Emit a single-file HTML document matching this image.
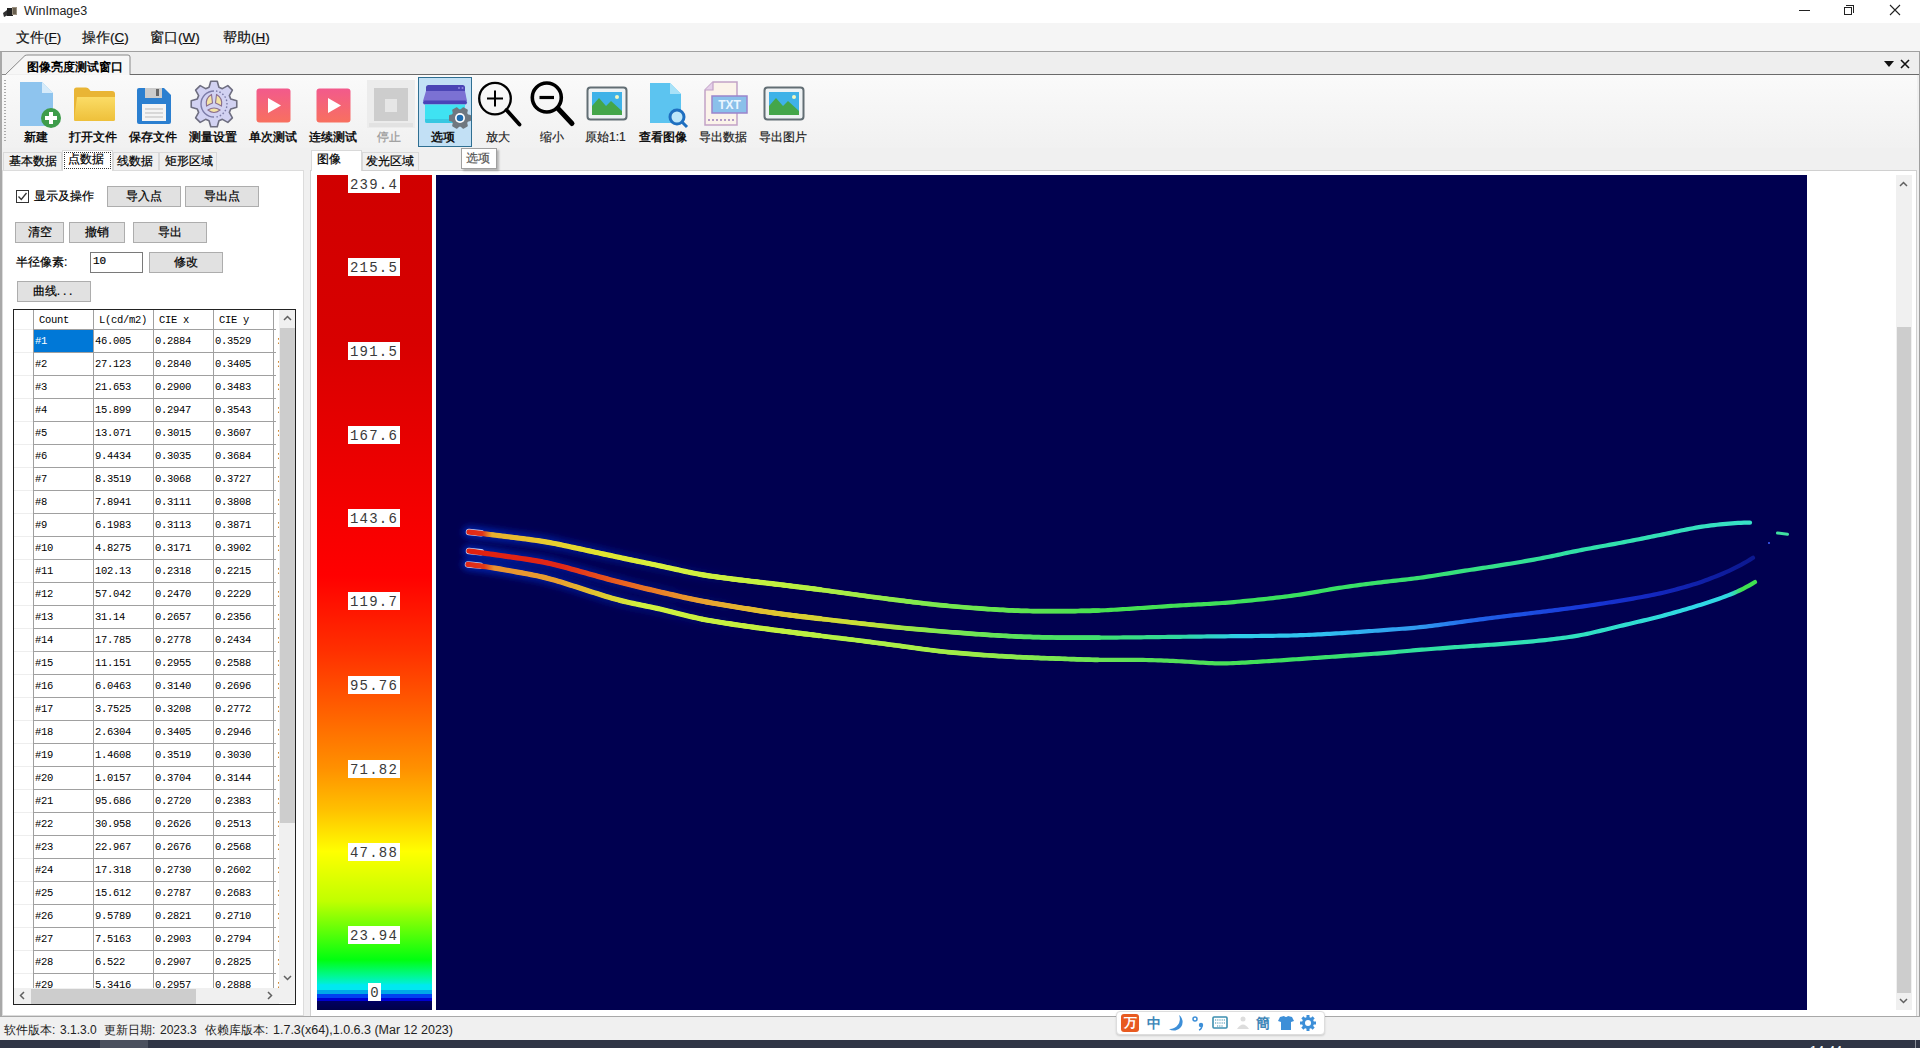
<!DOCTYPE html><html><head><meta charset="utf-8"><title>WinImage3</title><style>
*{margin:0;padding:0;box-sizing:border-box}
html,body{width:1920px;height:1048px;overflow:hidden}
body{position:relative;background:#f0f0f0;font-family:"Liberation Sans",sans-serif;color:#000;font-size:12px}
.t,.btn span{-webkit-text-stroke:0.2px currentColor}
.t[style*="bold"]{-webkit-text-stroke:0}
.a{position:absolute}
.t{position:absolute;white-space:nowrap;line-height:1}
.btn{position:absolute;background:#e1e1e1;border:1px solid #adadad}
.btn span{position:absolute;left:0;right:0;text-align:center;white-space:nowrap;line-height:1}
.mono{font-family:"Liberation Mono",monospace}
.cell{position:absolute;white-space:nowrap;line-height:1;font-family:"Liberation Mono",monospace;font-size:10.5px;letter-spacing:-0.3px}
.lbl{position:absolute;left:348px;width:52px;height:18px;background:#fff;font-family:"Liberation Mono",monospace;font-size:14px;letter-spacing:1.2px;color:#3a3a3a;line-height:21px;text-align:center;overflow:hidden}
</style></head><body>
<div class="a" style="left:0;top:0;width:1920px;height:23px;background:#fff"></div>
<svg class="a" style="left:2px;top:6px" width="16" height="12" viewBox="0 0 16 12"><path d="M1 7 L5 4 L6 9 L2 11Z" fill="#333"/><rect x="5" y="2" width="6" height="8" fill="#222"/><rect x="10" y="1" width="5" height="8" fill="#9a9080"/><rect x="11" y="2" width="3" height="6" fill="#6a6050"/></svg>
<div class="t" style="left:24px;top:5px;font-size:12.5px;color:#222;-webkit-text-stroke:0">WinImage3</div>
<div class="a" style="left:1799px;top:10px;width:11px;height:1px;background:#222"></div>
<div class="a" style="left:1844px;top:7px;width:8px;height:8px;border:1px solid #222;background:#fff"></div>
<div class="a" style="left:1846px;top:5px;width:8px;height:8px;border-top:1px solid #222;border-right:1px solid #222"></div>
<svg class="a" style="left:1889px;top:4px" width="12" height="12" viewBox="0 0 12 12"><path d="M1 1L11 11M11 1L1 11" stroke="#222" stroke-width="1.1"/></svg>
<div class="a" style="left:0;top:23px;width:1920px;height:28px;background:#f5f5f5"></div>
<div class="t" style="left:16px;top:31px;font-size:13.5px;color:#111">文件(<u>F</u>)</div>
<div class="t" style="left:82px;top:31px;font-size:13.5px;color:#111">操作(<u>C</u>)</div>
<div class="t" style="left:150px;top:31px;font-size:13.5px;color:#111">窗口(<u>W</u>)</div>
<div class="t" style="left:223px;top:31px;font-size:13.5px;color:#111">帮助(<u>H</u>)</div>
<div class="a" style="left:0;top:51px;width:1920px;height:1px;background:#a0a0a0"></div>
<div class="a" style="left:0;top:52px;width:1920px;height:23px;background:#eeeeee"></div>
<svg class="a" style="left:0;top:52px" width="140" height="24" viewBox="0 0 140 24"><path d="M6 22 L25 3.5 Q26 3 28 3 L128 3 Q130 3 130 5 L130 23 L140 23" fill="#f7f7f7" stroke="#888" stroke-width="1"/><path d="M0 22.5 L6 22.5" stroke="#888"/></svg>
<div class="t" style="left:27px;top:61px;font-size:12px;font-weight:bold">图像亮度测试窗口</div>
<div class="a" style="left:130px;top:74px;width:1790px;height:1px;background:#6a6a6a"></div>
<svg class="a" style="left:1884px;top:61px" width="10" height="6" viewBox="0 0 10 6"><path d="M0 0H10L5 6Z" fill="#111"/></svg>
<svg class="a" style="left:1900px;top:59px" width="10" height="10" viewBox="0 0 10 10"><path d="M1 1L9 9M9 1L1 9" stroke="#111" stroke-width="1.6"/></svg>
<div class="a" style="left:0;top:52px;width:2px;height:965px;background:#a8a8a8"></div>
<div class="a" style="left:2px;top:75px;width:1915px;height:73px;background:linear-gradient(#fafafa,#f1f1f1)"></div>
<div class="a" style="left:1919px;top:52px;width:1px;height:965px;background:#a0a0a0"></div>
<div class="a" style="left:4px;top:80px;width:2px;height:62px;background:repeating-linear-gradient(#aaa 0 1px,transparent 1px 3px)"></div>
<div class="a" style="left:418px;top:77px;width:54px;height:70px;background:#c2e0f5;border:1px solid #2f6f92"></div>
<svg class="a" style="left:18px;top:81px" width="46" height="50" viewBox="0 0 46 50"><path d="M2 1 H24 L35 12 V45 H2Z" fill="#8ec4ee"/><path d="M24 1 V12 H35Z" fill="#d6ebfa"/><circle cx="33" cy="37" r="10" fill="#3e9c4a"/><path d="M33 31V43M27 37H39" stroke="#fff" stroke-width="4"/></svg>
<svg class="a" style="left:73px;top:86px" width="44" height="38" viewBox="0 0 44 38"><defs><linearGradient id="fg" x1="0" y1="0" x2="0" y2="1"><stop offset="0" stop-color="#fbdc66"/><stop offset="1" stop-color="#eec03a"/></linearGradient></defs><path d="M1 4 Q1 1.5 3.5 1.5 H13 Q15 1.5 16 3 L17.5 5 H39 Q42 5 42 8 V33 Q42 35 40 35 H3 Q1 35 1 33Z" fill="#e9b535"/><path d="M4 11 H42 V33 Q42 35 40 35 H2 Q1 35 1.2 33 Z" fill="url(#fg)"/></svg>
<svg class="a" style="left:136px;top:87px" width="36" height="38" viewBox="0 0 36 38"><path d="M1 3 Q1 1 3 1 H28 L35 8 V35 Q35 37 33 37 H3 Q1 37 1 35Z" fill="#2b7fd0"/><rect x="9" y="1" width="17" height="10" fill="#ccc"/><rect x="20" y="2" width="3" height="7" fill="#666"/><rect x="6" y="17" width="24" height="17" fill="#f4f4f4"/><path d="M9 22H27M9 26H27M9 30H27" stroke="#bbb" stroke-width="1"/></svg>
<svg class="a" style="left:189px;top:79px" width="50" height="50" viewBox="0 0 50 50"><path d="M20.07 8.21 L21.76 2.23 L28.24 2.23 L29.93 8.21 L33.39 9.64 L38.81 6.61 L43.39 11.19 L40.36 16.61 L41.79 20.07 L47.77 21.76 L47.77 28.24 L41.79 29.93 L40.36 33.39 L43.39 38.81 L38.81 43.39 L33.39 40.36 L29.93 41.79 L28.24 47.77 L21.76 47.77 L20.07 41.79 L16.61 40.36 L11.19 43.39 L6.61 38.81 L9.64 33.39 L8.21 29.93 L2.23 28.24 L2.23 21.76 L8.21 20.07 L9.64 16.61 L6.61 11.19 L11.19 6.61 L16.61 9.64Z" fill="#d2d2f2" stroke="#6e6e80" stroke-width="1.6" stroke-linejoin="round"/><path d="M25 12 A13 13 0 1 0 25 38" fill="none" stroke="#7c7ca8" stroke-width="1.4"/><path d="M27 12 A13 13 0 0 1 38 25 A13 13 0 0 1 27 38" fill="none" stroke="#7c7ca8" stroke-width="1.4" stroke-dasharray="1.5 2"/><g fill="#f3e3a4" stroke="#8a6e8e" stroke-width="1.1"><path d="M22.5 15.5 Q16 19 17.5 27 Q21 25 23.5 24 Z"/><path d="M27.5 15.5 Q34 19 32.5 27 Q29 25 26.5 24 Z"/><path d="M19 31 Q25 27 31 31 Q25 36 19 31Z"/></g></svg>
<svg class="a" style="left:256px;top:88px" width="36" height="35" viewBox="0 0 36 35"><defs><linearGradient id="pg" x1="0" y1="0" x2="0" y2="1"><stop offset="0" stop-color="#f25a8c"/><stop offset="1" stop-color="#f8705f"/></linearGradient></defs><rect x="0.5" y="0.5" width="34" height="34" rx="3" fill="url(#pg)"/><path d="M12 10 L25 17.5 L12 25Z" fill="#fff"/></svg>
<svg class="a" style="left:316px;top:88px" width="36" height="35" viewBox="0 0 36 35"><rect x="0.5" y="0.5" width="34" height="34" rx="3" fill="url(#pg)"/><path d="M12 10 L25 17.5 L12 25Z" fill="#fff"/></svg>
<svg class="a" style="left:366px;top:79px" width="50" height="50" viewBox="0 0 50 50"><rect x="1" y="1" width="48" height="48" fill="#ececec"/><rect x="3" y="44" width="44" height="4" fill="#e2e2e2"/><rect x="8" y="9" width="34" height="33" fill="#cdcdcd"/><rect x="19" y="20" width="12" height="13" fill="#e6e6e6"/></svg>
<svg class="a" style="left:422px;top:83px" width="50" height="48" viewBox="0 0 50 48"><path d="M4 8 V4.5 Q4 2 6.5 2 H40.5 Q43 2 43 4.5 V8Z" fill="#4b45b5"/><path d="M4 8 H43 L45 18 H1Z" fill="#7b71d3"/><rect x="1" y="17.5" width="44" height="4" rx="2" fill="#4a42b8"/><circle cx="37" cy="5" r="1" fill="#8f88e0"/><circle cx="40.5" cy="5" r="1" fill="#8f88e0"/><path d="M3 21.5 H43 V38 Q43 40 41 40 H5 Q3 40 3 38Z" fill="#3fe2f2"/><path d="M3 36 H43 V38 Q43 40 41 40 H5 Q3 40 3 38Z" fill="#36c8e2"/><path d="M38.94 27.06 L41.20 25.00 L45.06 27.23 L44.41 30.22 L45.35 31.84 L48.26 32.77 L48.26 37.23 L45.35 38.16 L44.41 39.78 L45.06 42.77 L41.20 45.00 L38.94 42.94 L37.06 42.94 L34.80 45.00 L30.94 42.77 L31.59 39.78 L30.65 38.16 L27.74 37.23 L27.74 32.77 L30.65 31.84 L31.59 30.22 L30.94 27.23 L34.80 25.00 L37.06 27.06Z" fill="#6f7880" stroke="#6f7880" stroke-width="1.5" stroke-linejoin="round"/><circle cx="38" cy="35" r="5" fill="#ffffff"/><circle cx="38" cy="35" r="3.3" fill="#1f6db0"/></svg>
<svg class="a" style="left:476px;top:80px" width="48" height="48" viewBox="0 0 48 48"><circle cx="19" cy="18.6" r="15.8" fill="none" stroke="#000" stroke-width="2.3"/><path d="M19 10.5V26.5M11 18.6H27" stroke="#000" stroke-width="2"/><path d="M30.5 30 L43.5 44.5" stroke="#000" stroke-width="3.8" stroke-linecap="round"/></svg>
<svg class="a" style="left:529px;top:80px" width="48" height="48" viewBox="0 0 48 48"><circle cx="17.8" cy="17.5" r="14.5" fill="none" stroke="#000" stroke-width="3.6"/><path d="M10.5 17.5H25" stroke="#000" stroke-width="3.2"/><path d="M29 28.5 L43 43.5" stroke="#000" stroke-width="5" stroke-linecap="round"/></svg>
<svg class="a" style="left:586px;top:86px" width="42" height="36" viewBox="0 0 42 36"><rect x="1.5" y="1.5" width="39" height="32" rx="3" fill="#eef2f4" stroke="#626e74" stroke-width="2"/><rect x="6" y="6" width="30" height="23" fill="#3fb2e8"/><path d="M6 29 V20 L13 12 L20 20 L25 15 L36 25 V29Z" fill="#44a64a"/><circle cx="31" cy="11" r="2" fill="#f3f7c0"/></svg>
<svg class="a" style="left:648px;top:82px" width="42" height="48" viewBox="0 0 42 48"><path d="M2 1 H22 L33 12 V41 H2Z" fill="#5cc4f0"/><path d="M22 1V12H33Z" fill="#a8e2f8"/><circle cx="29" cy="35" r="7" fill="#bde6fa" stroke="#1f6fc0" stroke-width="3"/><path d="M34 40 L39 45" stroke="#1f6fc0" stroke-width="3"/></svg>
<svg class="a" style="left:702px;top:81px" width="48" height="46" viewBox="0 0 48 46"><path d="M3 9 L11 1 H35 V44 H3Z" fill="#fbf3ea" stroke="#c2a2c6" stroke-width="1.5"/><path d="M3 9 H11 V1" fill="#e5d0ea" stroke="#c2a2c6" stroke-width="1.2"/><rect x="10" y="15" width="35" height="17" fill="#8ac0ea" stroke="#9b85cc" stroke-width="1.5"/><text x="27.5" y="28" font-family="Liberation Sans" font-size="12" font-weight="bold" fill="#eaf6ff" text-anchor="middle">TXT</text><path d="M6 39 H33" stroke="#b49cc6" stroke-width="2" stroke-dasharray="2 2"/></svg>
<svg class="a" style="left:763px;top:86px" width="42" height="36" viewBox="0 0 42 36"><rect x="1.5" y="1.5" width="39" height="32" rx="3" fill="#eef2f4" stroke="#626e74" stroke-width="2"/><rect x="6" y="6" width="30" height="23" fill="#3fb2e8"/><path d="M6 29 V20 L13 12 L20 20 L25 15 L36 25 V29Z" fill="#44a64a"/><circle cx="31" cy="11" r="2" fill="#f3f7c0"/></svg>
<div class="t" style="left:24px;top:131px;font-size:12px;font-weight:bold;color:#111">新建</div>
<div class="t" style="left:69px;top:131px;font-size:12px;font-weight:bold;color:#111">打开文件</div>
<div class="t" style="left:129px;top:131px;font-size:12px;font-weight:bold;color:#111">保存文件</div>
<div class="t" style="left:189px;top:131px;font-size:12px;font-weight:bold;color:#111">测量设置</div>
<div class="t" style="left:249px;top:131px;font-size:12px;font-weight:bold;color:#111">单次测试</div>
<div class="t" style="left:309px;top:131px;font-size:12px;font-weight:bold;color:#111">连续测试</div>
<div class="t" style="left:377px;top:131px;font-size:12px;font-weight:normal;color:#999">停止</div>
<div class="t" style="left:431px;top:131px;font-size:12px;font-weight:bold;color:#111">选项</div>
<div class="t" style="left:486px;top:131px;font-size:12px;font-weight:normal;color:#222">放大</div>
<div class="t" style="left:540px;top:131px;font-size:12px;font-weight:normal;color:#222">缩小</div>
<div class="t" style="left:585px;top:131px;font-size:12px;font-weight:normal;color:#222">原始1:1</div>
<div class="t" style="left:639px;top:131px;font-size:12px;font-weight:bold;color:#111">查看图像</div>
<div class="t" style="left:699px;top:131px;font-size:12px;font-weight:normal;color:#222">导出数据</div>
<div class="t" style="left:759px;top:131px;font-size:12px;font-weight:normal;color:#222">导出图片</div>
<div class="a" style="left:2px;top:170px;width:302px;height:846px;background:#fff;border:1px solid #dcdcdc"></div>
<div class="a" style="left:3px;top:152px;width:59px;height:18px;background:#f0f0f0;border:1px solid #d9d9d9;border-bottom:none"></div>
<div class="a" style="left:62px;top:150px;width:51px;height:21px;background:#fff;border:1px solid #d9d9d9;border-bottom:none"></div>
<div class="a" style="left:113px;top:152px;width:46px;height:18px;background:#f0f0f0;border:1px solid #d9d9d9;border-bottom:none"></div>
<div class="a" style="left:159px;top:152px;width:58px;height:18px;background:#f0f0f0;border:1px solid #d9d9d9;border-bottom:none"></div>
<div class="a" style="left:64px;top:152px;width:47px;height:17px;border:1px dotted #333"></div>
<div class="t" style="left:9px;top:155px;font-size:12px">基本数据</div>
<div class="t" style="left:68px;top:153px;font-size:12px">点数据</div>
<div class="t" style="left:117px;top:155px;font-size:12px">线数据</div>
<div class="t" style="left:165px;top:155px;font-size:12px">矩形区域</div>
<div class="a" style="left:16px;top:190px;width:13px;height:13px;border:1px solid #333;background:#fff"></div>
<svg class="a" style="left:17px;top:191px" width="11" height="11" viewBox="0 0 11 11"><path d="M1.5 5.5 L4.3 8.5 L9.5 2" fill="none" stroke="#333" stroke-width="1.3"/></svg>
<div class="t" style="left:34px;top:190px;font-size:12px">显示及操作</div>
<div class="btn" style="left:107px;top:186px;width:74px;height:21px"><span style="top:3px;font-size:12px">导入点</span></div>
<div class="btn" style="left:185px;top:186px;width:74px;height:21px"><span style="top:3px;font-size:12px">导出点</span></div>
<div class="btn" style="left:15px;top:222px;width:49px;height:21px"><span style="top:3px;font-size:12px">清空</span></div>
<div class="btn" style="left:69px;top:222px;width:56px;height:21px"><span style="top:3px;font-size:12px">撤销</span></div>
<div class="btn" style="left:133px;top:222px;width:74px;height:21px"><span style="top:3px;font-size:12px">导出</span></div>
<div class="t" style="left:16px;top:256px;font-size:12px">半径像素:</div>
<div class="a" style="left:90px;top:252px;width:53px;height:21px;border:1px solid #7a7a7a;background:#fff"></div>
<div class="t mono" style="left:93px;top:256px;font-size:11px">10</div>
<div class="btn" style="left:149px;top:252px;width:74px;height:21px"><span style="top:3px;font-size:12px">修改</span></div>
<div class="btn" style="left:17px;top:281px;width:74px;height:21px"><span style="top:3px;font-size:12px"><span style="position:static;letter-spacing:0">曲线</span><span style="position:static;letter-spacing:2.8px">...</span></span></div>
<div class="a" style="left:13px;top:309px;width:283px;height:696px;border:1px solid #222;background:#fff;overflow:hidden">
<div class="a" style="left:0;top:0;width:265px;height:19px;background:#fff"></div>
<div class="cell" style="left:25px;top:5px">Count</div>
<div class="cell" style="left:85px;top:5px">L(cd/m2)</div>
<div class="cell" style="left:145px;top:5px">CIE x</div>
<div class="cell" style="left:205px;top:5px">CIE y</div>
<div class="a" style="left:19px;top:0;width:1px;height:678px;background:#a0a0a0"></div>
<div class="a" style="left:79px;top:0;width:1px;height:678px;background:#a0a0a0"></div>
<div class="a" style="left:139px;top:0;width:1px;height:678px;background:#a0a0a0"></div>
<div class="a" style="left:199px;top:0;width:1px;height:678px;background:#a0a0a0"></div>
<div class="a" style="left:259px;top:0;width:1px;height:678px;background:#a0a0a0"></div>
<div class="a" style="left:19px;top:19px;width:243px;height:1px;background:#a0a0a0"></div>
<div class="a" style="left:0;top:19px;width:19px;height:1px;background:#eee"></div>
<div class="a" style="left:19px;top:42px;width:243px;height:1px;background:#a0a0a0"></div>
<div class="a" style="left:0;top:42px;width:19px;height:1px;background:#eee"></div>
<div class="a" style="left:19px;top:65px;width:243px;height:1px;background:#a0a0a0"></div>
<div class="a" style="left:0;top:65px;width:19px;height:1px;background:#eee"></div>
<div class="a" style="left:19px;top:88px;width:243px;height:1px;background:#a0a0a0"></div>
<div class="a" style="left:0;top:88px;width:19px;height:1px;background:#eee"></div>
<div class="a" style="left:19px;top:111px;width:243px;height:1px;background:#a0a0a0"></div>
<div class="a" style="left:0;top:111px;width:19px;height:1px;background:#eee"></div>
<div class="a" style="left:19px;top:134px;width:243px;height:1px;background:#a0a0a0"></div>
<div class="a" style="left:0;top:134px;width:19px;height:1px;background:#eee"></div>
<div class="a" style="left:19px;top:157px;width:243px;height:1px;background:#a0a0a0"></div>
<div class="a" style="left:0;top:157px;width:19px;height:1px;background:#eee"></div>
<div class="a" style="left:19px;top:180px;width:243px;height:1px;background:#a0a0a0"></div>
<div class="a" style="left:0;top:180px;width:19px;height:1px;background:#eee"></div>
<div class="a" style="left:19px;top:203px;width:243px;height:1px;background:#a0a0a0"></div>
<div class="a" style="left:0;top:203px;width:19px;height:1px;background:#eee"></div>
<div class="a" style="left:19px;top:226px;width:243px;height:1px;background:#a0a0a0"></div>
<div class="a" style="left:0;top:226px;width:19px;height:1px;background:#eee"></div>
<div class="a" style="left:19px;top:249px;width:243px;height:1px;background:#a0a0a0"></div>
<div class="a" style="left:0;top:249px;width:19px;height:1px;background:#eee"></div>
<div class="a" style="left:19px;top:272px;width:243px;height:1px;background:#a0a0a0"></div>
<div class="a" style="left:0;top:272px;width:19px;height:1px;background:#eee"></div>
<div class="a" style="left:19px;top:295px;width:243px;height:1px;background:#a0a0a0"></div>
<div class="a" style="left:0;top:295px;width:19px;height:1px;background:#eee"></div>
<div class="a" style="left:19px;top:318px;width:243px;height:1px;background:#a0a0a0"></div>
<div class="a" style="left:0;top:318px;width:19px;height:1px;background:#eee"></div>
<div class="a" style="left:19px;top:341px;width:243px;height:1px;background:#a0a0a0"></div>
<div class="a" style="left:0;top:341px;width:19px;height:1px;background:#eee"></div>
<div class="a" style="left:19px;top:364px;width:243px;height:1px;background:#a0a0a0"></div>
<div class="a" style="left:0;top:364px;width:19px;height:1px;background:#eee"></div>
<div class="a" style="left:19px;top:387px;width:243px;height:1px;background:#a0a0a0"></div>
<div class="a" style="left:0;top:387px;width:19px;height:1px;background:#eee"></div>
<div class="a" style="left:19px;top:410px;width:243px;height:1px;background:#a0a0a0"></div>
<div class="a" style="left:0;top:410px;width:19px;height:1px;background:#eee"></div>
<div class="a" style="left:19px;top:433px;width:243px;height:1px;background:#a0a0a0"></div>
<div class="a" style="left:0;top:433px;width:19px;height:1px;background:#eee"></div>
<div class="a" style="left:19px;top:456px;width:243px;height:1px;background:#a0a0a0"></div>
<div class="a" style="left:0;top:456px;width:19px;height:1px;background:#eee"></div>
<div class="a" style="left:19px;top:479px;width:243px;height:1px;background:#a0a0a0"></div>
<div class="a" style="left:0;top:479px;width:19px;height:1px;background:#eee"></div>
<div class="a" style="left:19px;top:502px;width:243px;height:1px;background:#a0a0a0"></div>
<div class="a" style="left:0;top:502px;width:19px;height:1px;background:#eee"></div>
<div class="a" style="left:19px;top:525px;width:243px;height:1px;background:#a0a0a0"></div>
<div class="a" style="left:0;top:525px;width:19px;height:1px;background:#eee"></div>
<div class="a" style="left:19px;top:548px;width:243px;height:1px;background:#a0a0a0"></div>
<div class="a" style="left:0;top:548px;width:19px;height:1px;background:#eee"></div>
<div class="a" style="left:19px;top:571px;width:243px;height:1px;background:#a0a0a0"></div>
<div class="a" style="left:0;top:571px;width:19px;height:1px;background:#eee"></div>
<div class="a" style="left:19px;top:594px;width:243px;height:1px;background:#a0a0a0"></div>
<div class="a" style="left:0;top:594px;width:19px;height:1px;background:#eee"></div>
<div class="a" style="left:19px;top:617px;width:243px;height:1px;background:#a0a0a0"></div>
<div class="a" style="left:0;top:617px;width:19px;height:1px;background:#eee"></div>
<div class="a" style="left:19px;top:640px;width:243px;height:1px;background:#a0a0a0"></div>
<div class="a" style="left:0;top:640px;width:19px;height:1px;background:#eee"></div>
<div class="a" style="left:19px;top:663px;width:243px;height:1px;background:#a0a0a0"></div>
<div class="a" style="left:0;top:663px;width:19px;height:1px;background:#eee"></div>
<div class="a" style="left:19px;top:686px;width:243px;height:1px;background:#a0a0a0"></div>
<div class="a" style="left:0;top:686px;width:19px;height:1px;background:#eee"></div>
<div class="a" style="left:20px;top:20px;width:59px;height:22px;background:#0078d7"></div>
<div class="cell" style="left:21px;top:26px;color:#fff">#1</div>
<div class="cell" style="left:81px;top:26px">46.005</div>
<div class="cell" style="left:141px;top:26px">0.2884</div>
<div class="cell" style="left:201px;top:26px">0.3529</div>
<div class="cell" style="left:262px;top:26px">:</div>
<div class="cell" style="left:21px;top:49px;color:#000">#2</div>
<div class="cell" style="left:81px;top:49px">27.123</div>
<div class="cell" style="left:141px;top:49px">0.2840</div>
<div class="cell" style="left:201px;top:49px">0.3405</div>
<div class="cell" style="left:262px;top:49px">:</div>
<div class="cell" style="left:21px;top:72px;color:#000">#3</div>
<div class="cell" style="left:81px;top:72px">21.653</div>
<div class="cell" style="left:141px;top:72px">0.2900</div>
<div class="cell" style="left:201px;top:72px">0.3483</div>
<div class="cell" style="left:262px;top:72px">:</div>
<div class="cell" style="left:21px;top:95px;color:#000">#4</div>
<div class="cell" style="left:81px;top:95px">15.899</div>
<div class="cell" style="left:141px;top:95px">0.2947</div>
<div class="cell" style="left:201px;top:95px">0.3543</div>
<div class="cell" style="left:262px;top:95px">:</div>
<div class="cell" style="left:21px;top:118px;color:#000">#5</div>
<div class="cell" style="left:81px;top:118px">13.071</div>
<div class="cell" style="left:141px;top:118px">0.3015</div>
<div class="cell" style="left:201px;top:118px">0.3607</div>
<div class="cell" style="left:262px;top:118px">:</div>
<div class="cell" style="left:21px;top:141px;color:#000">#6</div>
<div class="cell" style="left:81px;top:141px">9.4434</div>
<div class="cell" style="left:141px;top:141px">0.3035</div>
<div class="cell" style="left:201px;top:141px">0.3684</div>
<div class="cell" style="left:262px;top:141px">:</div>
<div class="cell" style="left:21px;top:164px;color:#000">#7</div>
<div class="cell" style="left:81px;top:164px">8.3519</div>
<div class="cell" style="left:141px;top:164px">0.3068</div>
<div class="cell" style="left:201px;top:164px">0.3727</div>
<div class="cell" style="left:262px;top:164px">:</div>
<div class="cell" style="left:21px;top:187px;color:#000">#8</div>
<div class="cell" style="left:81px;top:187px">7.8941</div>
<div class="cell" style="left:141px;top:187px">0.3111</div>
<div class="cell" style="left:201px;top:187px">0.3808</div>
<div class="cell" style="left:262px;top:187px">:</div>
<div class="cell" style="left:21px;top:210px;color:#000">#9</div>
<div class="cell" style="left:81px;top:210px">6.1983</div>
<div class="cell" style="left:141px;top:210px">0.3113</div>
<div class="cell" style="left:201px;top:210px">0.3871</div>
<div class="cell" style="left:262px;top:210px">:</div>
<div class="cell" style="left:21px;top:233px;color:#000">#10</div>
<div class="cell" style="left:81px;top:233px">4.8275</div>
<div class="cell" style="left:141px;top:233px">0.3171</div>
<div class="cell" style="left:201px;top:233px">0.3902</div>
<div class="cell" style="left:262px;top:233px">:</div>
<div class="cell" style="left:21px;top:256px;color:#000">#11</div>
<div class="cell" style="left:81px;top:256px">102.13</div>
<div class="cell" style="left:141px;top:256px">0.2318</div>
<div class="cell" style="left:201px;top:256px">0.2215</div>
<div class="cell" style="left:262px;top:256px">:</div>
<div class="cell" style="left:21px;top:279px;color:#000">#12</div>
<div class="cell" style="left:81px;top:279px">57.042</div>
<div class="cell" style="left:141px;top:279px">0.2470</div>
<div class="cell" style="left:201px;top:279px">0.2229</div>
<div class="cell" style="left:262px;top:279px">:</div>
<div class="cell" style="left:21px;top:302px;color:#000">#13</div>
<div class="cell" style="left:81px;top:302px">31.14</div>
<div class="cell" style="left:141px;top:302px">0.2657</div>
<div class="cell" style="left:201px;top:302px">0.2356</div>
<div class="cell" style="left:262px;top:302px">:</div>
<div class="cell" style="left:21px;top:325px;color:#000">#14</div>
<div class="cell" style="left:81px;top:325px">17.785</div>
<div class="cell" style="left:141px;top:325px">0.2778</div>
<div class="cell" style="left:201px;top:325px">0.2434</div>
<div class="cell" style="left:262px;top:325px">:</div>
<div class="cell" style="left:21px;top:348px;color:#000">#15</div>
<div class="cell" style="left:81px;top:348px">11.151</div>
<div class="cell" style="left:141px;top:348px">0.2955</div>
<div class="cell" style="left:201px;top:348px">0.2588</div>
<div class="cell" style="left:262px;top:348px">:</div>
<div class="cell" style="left:21px;top:371px;color:#000">#16</div>
<div class="cell" style="left:81px;top:371px">6.0463</div>
<div class="cell" style="left:141px;top:371px">0.3140</div>
<div class="cell" style="left:201px;top:371px">0.2696</div>
<div class="cell" style="left:262px;top:371px">:</div>
<div class="cell" style="left:21px;top:394px;color:#000">#17</div>
<div class="cell" style="left:81px;top:394px">3.7525</div>
<div class="cell" style="left:141px;top:394px">0.3208</div>
<div class="cell" style="left:201px;top:394px">0.2772</div>
<div class="cell" style="left:262px;top:394px">:</div>
<div class="cell" style="left:21px;top:417px;color:#000">#18</div>
<div class="cell" style="left:81px;top:417px">2.6304</div>
<div class="cell" style="left:141px;top:417px">0.3405</div>
<div class="cell" style="left:201px;top:417px">0.2946</div>
<div class="cell" style="left:262px;top:417px">:</div>
<div class="cell" style="left:21px;top:440px;color:#000">#19</div>
<div class="cell" style="left:81px;top:440px">1.4608</div>
<div class="cell" style="left:141px;top:440px">0.3519</div>
<div class="cell" style="left:201px;top:440px">0.3030</div>
<div class="cell" style="left:262px;top:440px">:</div>
<div class="cell" style="left:21px;top:463px;color:#000">#20</div>
<div class="cell" style="left:81px;top:463px">1.0157</div>
<div class="cell" style="left:141px;top:463px">0.3704</div>
<div class="cell" style="left:201px;top:463px">0.3144</div>
<div class="cell" style="left:262px;top:463px">:</div>
<div class="cell" style="left:21px;top:486px;color:#000">#21</div>
<div class="cell" style="left:81px;top:486px">95.686</div>
<div class="cell" style="left:141px;top:486px">0.2720</div>
<div class="cell" style="left:201px;top:486px">0.2383</div>
<div class="cell" style="left:262px;top:486px">:</div>
<div class="cell" style="left:21px;top:509px;color:#000">#22</div>
<div class="cell" style="left:81px;top:509px">30.958</div>
<div class="cell" style="left:141px;top:509px">0.2626</div>
<div class="cell" style="left:201px;top:509px">0.2513</div>
<div class="cell" style="left:262px;top:509px">:</div>
<div class="cell" style="left:21px;top:532px;color:#000">#23</div>
<div class="cell" style="left:81px;top:532px">22.967</div>
<div class="cell" style="left:141px;top:532px">0.2676</div>
<div class="cell" style="left:201px;top:532px">0.2568</div>
<div class="cell" style="left:262px;top:532px">:</div>
<div class="cell" style="left:21px;top:555px;color:#000">#24</div>
<div class="cell" style="left:81px;top:555px">17.318</div>
<div class="cell" style="left:141px;top:555px">0.2730</div>
<div class="cell" style="left:201px;top:555px">0.2602</div>
<div class="cell" style="left:262px;top:555px">:</div>
<div class="cell" style="left:21px;top:578px;color:#000">#25</div>
<div class="cell" style="left:81px;top:578px">15.612</div>
<div class="cell" style="left:141px;top:578px">0.2787</div>
<div class="cell" style="left:201px;top:578px">0.2683</div>
<div class="cell" style="left:262px;top:578px">:</div>
<div class="cell" style="left:21px;top:601px;color:#000">#26</div>
<div class="cell" style="left:81px;top:601px">9.5789</div>
<div class="cell" style="left:141px;top:601px">0.2821</div>
<div class="cell" style="left:201px;top:601px">0.2710</div>
<div class="cell" style="left:262px;top:601px">:</div>
<div class="cell" style="left:21px;top:624px;color:#000">#27</div>
<div class="cell" style="left:81px;top:624px">7.5163</div>
<div class="cell" style="left:141px;top:624px">0.2903</div>
<div class="cell" style="left:201px;top:624px">0.2794</div>
<div class="cell" style="left:262px;top:624px">:</div>
<div class="cell" style="left:21px;top:647px;color:#000">#28</div>
<div class="cell" style="left:81px;top:647px">6.522</div>
<div class="cell" style="left:141px;top:647px">0.2907</div>
<div class="cell" style="left:201px;top:647px">0.2825</div>
<div class="cell" style="left:262px;top:647px">:</div>
<div class="cell" style="left:21px;top:670px;color:#000">#29</div>
<div class="cell" style="left:81px;top:670px">5.3416</div>
<div class="cell" style="left:141px;top:670px">0.2957</div>
<div class="cell" style="left:201px;top:670px">0.2888</div>
<div class="cell" style="left:262px;top:670px">:</div>
<div class="a" style="left:265px;top:0;width:17px;height:678px;background:#f0f0f0"></div>
<div class="a" style="left:266px;top:18px;width:15px;height:495px;background:#cdcdcd"></div>
<svg class="a" style="left:269px;top:5px" width="9" height="6" viewBox="0 0 9 6"><path d="M1 5L4.5 1.5L8 5" fill="none" stroke="#606060" stroke-width="1.5"/></svg>
<svg class="a" style="left:269px;top:665px" width="9" height="6" viewBox="0 0 9 6"><path d="M1 1L4.5 4.5L8 1" fill="none" stroke="#606060" stroke-width="1.5"/></svg>
<div class="a" style="left:0;top:678px;width:265px;height:16px;background:#f0f0f0"></div>
<div class="a" style="left:17px;top:679px;width:165px;height:15px;background:#cdcdcd"></div>
<svg class="a" style="left:5px;top:681px" width="6" height="9" viewBox="0 0 6 9"><path d="M5 1L1.5 4.5L5 8" fill="none" stroke="#606060" stroke-width="1.5"/></svg>
<svg class="a" style="left:253px;top:681px" width="6" height="9" viewBox="0 0 6 9"><path d="M1 1L4.5 4.5L1 8" fill="none" stroke="#606060" stroke-width="1.5"/></svg>
<div class="a" style="left:265px;top:678px;width:17px;height:15px;background:#f0f0f0"></div>
</div>
<div class="a" style="left:310px;top:170px;width:1607px;height:847px;background:#fff;border:1px solid #d0d0d0"></div>
<div class="a" style="left:311px;top:150px;width:51px;height:21px;background:#fff;border:1px solid #d9d9d9;border-bottom:none"></div>
<div class="a" style="left:362px;top:152px;width:57px;height:18px;background:#f0f0f0;border:1px solid #d9d9d9;border-bottom:none"></div>
<div class="t" style="left:317px;top:153px;font-size:12px">图像</div>
<div class="t" style="left:366px;top:155px;font-size:12px">发光区域</div>
<div class="a" style="left:317px;top:175px;width:115px;height:835px;background:linear-gradient(#d00000 0.00%,#d80000 20.00%,#e60000 30.50%,#f40000 40.00%,#ff0000 48.00%,#ff3000 57.00%,#ff5800 63.00%,#ff9000 71.00%,#ffc000 76.00%,#ffff00 81.00%,#c0ff00 87.00%,#00ff10 94.00%,#00f890 95.89%,#00f0d0 96.77%,#00e8f0 97.00%,#00e8f0 97.59%,#00a8e8 97.59%,#00a8e8 98.03%,#0040f0 98.03%,#0040f0 98.53%,#0000d0 98.53%,#0000d0 98.98%,#000060 98.98%,#000048 100.00%)"></div>
<div class="lbl" style="top:175px">239.4</div>
<div class="lbl" style="top:258px">215.5</div>
<div class="lbl" style="top:342px">191.5</div>
<div class="lbl" style="top:426px">167.6</div>
<div class="lbl" style="top:509px">143.6</div>
<div class="lbl" style="top:592px">119.7</div>
<div class="lbl" style="top:676px">95.76</div>
<div class="lbl" style="top:760px">71.82</div>
<div class="lbl" style="top:843px">47.88</div>
<div class="lbl" style="top:926px">23.94</div>
<div class="lbl" style="top:983px;left:368px;width:13px;height:18px;letter-spacing:0">0</div>
<div class="a" style="left:436px;top:175px;width:1371px;height:835px;background:#000050"></div>
<svg class="a" style="left:436px;top:175px" width="1371" height="835" viewBox="436 175 1371 835"><defs><linearGradient id="gA" gradientUnits="userSpaceOnUse" x1="436" y1="0" x2="1807" y2="0"><stop offset="0.0241" stop-color="#e02818"/><stop offset="0.0336" stop-color="#e03018"/><stop offset="0.0408" stop-color="#e8b030"/><stop offset="0.0759" stop-color="#e8c830"/><stop offset="0.1196" stop-color="#e0e430"/><stop offset="0.1634" stop-color="#d8f040"/><stop offset="0.2509" stop-color="#c0f040"/><stop offset="0.3093" stop-color="#a0ec48"/><stop offset="0.3676" stop-color="#78e850"/><stop offset="0.4843" stop-color="#48e050"/><stop offset="0.6302" stop-color="#38e060"/><stop offset="0.7177" stop-color="#38e070"/><stop offset="0.8344" stop-color="#30e0a8"/><stop offset="0.9599" stop-color="#38e0c8"/></linearGradient><linearGradient id="gB" gradientUnits="userSpaceOnUse" x1="436" y1="0" x2="1807" y2="0"><stop offset="0.0241" stop-color="#e02010"/><stop offset="0.0904" stop-color="#e02818"/><stop offset="0.1342" stop-color="#e86020"/><stop offset="0.1926" stop-color="#e8a030"/><stop offset="0.2509" stop-color="#e0c830"/><stop offset="0.3093" stop-color="#c8e038"/><stop offset="0.3676" stop-color="#80e850"/><stop offset="0.4406" stop-color="#50e060"/><stop offset="0.4843" stop-color="#40e070"/><stop offset="0.5427" stop-color="#30d8a0"/><stop offset="0.5864" stop-color="#30d0e8"/><stop offset="0.6448" stop-color="#30c0f0"/><stop offset="0.7177" stop-color="#3098f0"/><stop offset="0.7615" stop-color="#2060e8"/><stop offset="0.8344" stop-color="#1838d8"/><stop offset="0.8855" stop-color="#1428c0"/><stop offset="0.9220" stop-color="#1020a8"/><stop offset="0.9606" stop-color="#0c1890"/></linearGradient><linearGradient id="gC" gradientUnits="userSpaceOnUse" x1="436" y1="0" x2="1807" y2="0"><stop offset="0.0233" stop-color="#e02818"/><stop offset="0.0350" stop-color="#e03818"/><stop offset="0.0423" stop-color="#e89030"/><stop offset="0.0904" stop-color="#e8a030"/><stop offset="0.1196" stop-color="#e0c830"/><stop offset="0.1488" stop-color="#d0f040"/><stop offset="0.2509" stop-color="#c0f040"/><stop offset="0.3093" stop-color="#b0f048"/><stop offset="0.3822" stop-color="#a0ec48"/><stop offset="0.4406" stop-color="#80e850"/><stop offset="0.5208" stop-color="#58e058"/><stop offset="0.6010" stop-color="#40e058"/><stop offset="0.6594" stop-color="#38e070"/><stop offset="0.7177" stop-color="#30e0a0"/><stop offset="0.8344" stop-color="#30e0c0"/><stop offset="0.9220" stop-color="#30d8e8"/><stop offset="0.9438" stop-color="#30d8e0"/><stop offset="0.9526" stop-color="#40e050"/><stop offset="0.9628" stop-color="#40e050"/></linearGradient><linearGradient id="halo" gradientUnits="userSpaceOnUse" x1="460" y1="0" x2="760" y2="0"><stop offset="0" stop-color="#0030d0" stop-opacity="0.7"/><stop offset="1" stop-color="#0030d0" stop-opacity="0"/></linearGradient><filter id="blur" x="-10%" y="-50%" width="120%" height="200%"><feGaussianBlur stdDeviation="3"/></filter></defs><path d="M469.0 532.00 L472.0 532.36 L475.0 532.71 L478.0 533.07 L481.0 533.42 L484.0 533.78 L487.0 534.15 L490.0 534.51 L493.0 534.88 L496.0 535.25 L499.0 535.62 L502.0 535.99 L505.0 536.36 L508.0 536.74 L511.0 537.12 L514.0 537.49 L517.0 537.87 L520.0 538.25 L523.0 538.63 L526.0 539.02 L529.0 539.41 L532.0 539.82 L535.0 540.24 L538.0 540.67 L541.0 541.13 L544.0 541.62 L547.0 542.13 L550.0 542.67 L553.0 543.23 L556.0 543.82 L559.0 544.42 L562.0 545.04 L565.0 545.67 L568.0 546.31 L571.0 546.96 L574.0 547.61 L577.0 548.26 L580.0 548.91 L583.0 549.56 L586.0 550.21 L589.0 550.86 L592.0 551.52 L595.0 552.17 L598.0 552.82 L601.0 553.47 L604.0 554.12 L607.0 554.77 L610.0 555.41 L613.0 556.05 L616.0 556.69 L619.0 557.33 L622.0 557.96 L625.0 558.59 L628.0 559.22 L631.0 559.84 L634.0 560.46 L637.0 561.08 L640.0 561.70 L643.0 562.32 L646.0 562.94 L649.0 563.57 L652.0 564.20 L655.0 564.83 L658.0 565.47 L661.0 566.11 L664.0 566.76 L667.0 567.42 L670.0 568.08 L673.0 568.74 L676.0 569.40 L679.0 570.06 L682.0 570.72 L685.0 571.37 L688.0 572.01 L691.0 572.63 L694.0 573.23 L697.0 573.80 L700.0 574.35 L703.0 574.87 L706.0 575.36 L709.0 575.82 L712.0 576.27 L715.0 576.69 L718.0 577.11 L721.0 577.51 L724.0 577.90 L727.0 578.29 L730.0 578.68 L733.0 579.06 L736.0 579.43 L739.0 579.81 L742.0 580.17 L745.0 580.53 L748.0 580.89 L751.0 581.25 L754.0 581.60 L757.0 581.95 L760.0 582.30 L763.0 582.65 L766.0 583.00 L769.0 583.35 L772.0 583.70 L775.0 584.05 L778.0 584.41 L781.0 584.77 L784.0 585.13 L787.0 585.50 L790.0 585.86 L793.0 586.23 L796.0 586.61 L799.0 586.98 L802.0 587.36 L805.0 587.74 L808.0 588.12 L811.0 588.50 L814.0 588.89 L817.0 589.28 L820.0 589.68 L823.0 590.09 L826.0 590.50 L829.0 590.91 L832.0 591.33 L835.0 591.75 L838.0 592.17 L841.0 592.59 L844.0 593.02 L847.0 593.44 L850.0 593.86 L853.0 594.28 L856.0 594.69 L859.0 595.10 L862.0 595.51 L865.0 595.92 L868.0 596.32 L871.0 596.72 L874.0 597.11 L877.0 597.50 L880.0 597.89 L883.0 598.28 L886.0 598.67 L889.0 599.06 L892.0 599.44 L895.0 599.82 L898.0 600.20 L901.0 600.58 L904.0 600.95 L907.0 601.32 L910.0 601.69 L913.0 602.05 L916.0 602.41 L919.0 602.77 L922.0 603.13 L925.0 603.48 L928.0 603.82 L931.0 604.16 L934.0 604.49 L937.0 604.81 L940.0 605.12 L943.0 605.42 L946.0 605.71 L949.0 605.98 L952.0 606.25 L955.0 606.51 L958.0 606.77 L961.0 607.02 L964.0 607.27 L967.0 607.51 L970.0 607.74 L973.0 607.98 L976.0 608.20 L979.0 608.42 L982.0 608.63 L985.0 608.84 L988.0 609.04 L991.0 609.23 L994.0 609.42 L997.0 609.60 L1000.0 609.78 L1003.0 609.96 L1006.0 610.12 L1009.0 610.28 L1012.0 610.43 L1015.0 610.56 L1018.0 610.68 L1021.0 610.78 L1024.0 610.87 L1027.0 610.94 L1030.0 611.00 L1033.0 611.05 L1036.0 611.09 L1039.0 611.12 L1042.0 611.15 L1045.0 611.17 L1048.0 611.19 L1051.0 611.20 L1054.0 611.20 L1057.0 611.20 L1060.0 611.19 L1063.0 611.18 L1066.0 611.16 L1069.0 611.13 L1072.0 611.10 L1075.0 611.06 L1078.0 611.02 L1081.0 610.97 L1084.0 610.91 L1087.0 610.85 L1090.0 610.78 L1093.0 610.70 L1096.0 610.61 L1099.0 610.50 L1102.0 610.38 L1105.0 610.24 L1108.0 610.09 L1111.0 609.93 L1114.0 609.75 L1117.0 609.57 L1120.0 609.39 L1123.0 609.20 L1126.0 609.00 L1129.0 608.81 L1132.0 608.61 L1135.0 608.41 L1138.0 608.21 L1141.0 608.01 L1144.0 607.80 L1147.0 607.60 L1150.0 607.39 L1153.0 607.19 L1156.0 606.98 L1159.0 606.77 L1162.0 606.57 L1165.0 606.36 L1168.0 606.16 L1171.0 605.96 L1174.0 605.77 L1177.0 605.59 L1180.0 605.41 L1183.0 605.23 L1186.0 605.07 L1189.0 604.91 L1192.0 604.75 L1195.0 604.60 L1198.0 604.45 L1201.0 604.29 L1204.0 604.14 L1207.0 603.98 L1210.0 603.81 L1213.0 603.63 L1216.0 603.45 L1219.0 603.24 L1222.0 603.03 L1225.0 602.80 L1228.0 602.55 L1231.0 602.30 L1234.0 602.04 L1237.0 601.76 L1240.0 601.48 L1243.0 601.20 L1246.0 600.91 L1249.0 600.62 L1252.0 600.32 L1255.0 600.01 L1258.0 599.70 L1261.0 599.39 L1264.0 599.06 L1267.0 598.73 L1270.0 598.39 L1273.0 598.05 L1276.0 597.70 L1279.0 597.35 L1282.0 596.99 L1285.0 596.62 L1288.0 596.24 L1291.0 595.85 L1294.0 595.45 L1297.0 595.02 L1300.0 594.58 L1303.0 594.12 L1306.0 593.63 L1309.0 593.13 L1312.0 592.62 L1315.0 592.09 L1318.0 591.56 L1321.0 591.02 L1324.0 590.48 L1327.0 589.95 L1330.0 589.42 L1333.0 588.91 L1336.0 588.41 L1339.0 587.92 L1342.0 587.45 L1345.0 587.00 L1348.0 586.56 L1351.0 586.13 L1354.0 585.72 L1357.0 585.31 L1360.0 584.92 L1363.0 584.53 L1366.0 584.14 L1369.0 583.76 L1372.0 583.38 L1375.0 583.01 L1378.0 582.65 L1381.0 582.29 L1384.0 581.94 L1387.0 581.59 L1390.0 581.25 L1393.0 580.92 L1396.0 580.59 L1399.0 580.25 L1402.0 579.92 L1405.0 579.58 L1408.0 579.24 L1411.0 578.88 L1414.0 578.51 L1417.0 578.13 L1420.0 577.73 L1423.0 577.31 L1426.0 576.88 L1429.0 576.43 L1432.0 575.97 L1435.0 575.49 L1438.0 575.01 L1441.0 574.53 L1444.0 574.04 L1447.0 573.56 L1450.0 573.07 L1453.0 572.59 L1456.0 572.11 L1459.0 571.63 L1462.0 571.16 L1465.0 570.69 L1468.0 570.23 L1471.0 569.77 L1474.0 569.31 L1477.0 568.85 L1480.0 568.40 L1483.0 567.94 L1486.0 567.49 L1489.0 567.03 L1492.0 566.57 L1495.0 566.10 L1498.0 565.63 L1501.0 565.16 L1504.0 564.68 L1507.0 564.19 L1510.0 563.70 L1513.0 563.21 L1516.0 562.71 L1519.0 562.20 L1522.0 561.70 L1525.0 561.18 L1528.0 560.66 L1531.0 560.13 L1534.0 559.59 L1537.0 559.04 L1540.0 558.48 L1543.0 557.89 L1546.0 557.30 L1549.0 556.69 L1552.0 556.08 L1555.0 555.45 L1558.0 554.82 L1561.0 554.19 L1564.0 553.55 L1567.0 552.92 L1570.0 552.30 L1573.0 551.68 L1576.0 551.07 L1579.0 550.48 L1582.0 549.89 L1585.0 549.31 L1588.0 548.75 L1591.0 548.19 L1594.0 547.64 L1597.0 547.10 L1600.0 546.55 L1603.0 546.01 L1606.0 545.47 L1609.0 544.93 L1612.0 544.38 L1615.0 543.83 L1618.0 543.27 L1621.0 542.70 L1624.0 542.13 L1627.0 541.55 L1630.0 540.97 L1633.0 540.38 L1636.0 539.79 L1639.0 539.19 L1642.0 538.59 L1645.0 537.99 L1648.0 537.39 L1651.0 536.78 L1654.0 536.17 L1657.0 535.56 L1660.0 534.94 L1663.0 534.32 L1666.0 533.70 L1669.0 533.07 L1672.0 532.44 L1675.0 531.81 L1678.0 531.19 L1681.0 530.56 L1684.0 529.95 L1687.0 529.35 L1690.0 528.77 L1693.0 528.20 L1696.0 527.67 L1699.0 527.16 L1702.0 526.69 L1705.0 526.24 L1708.0 525.83 L1711.0 525.44 L1714.0 525.08 L1717.0 524.73 L1720.0 524.40 L1723.0 524.09 L1726.0 523.80 L1729.0 523.54 L1732.0 523.30 L1735.0 523.09 L1738.0 522.92 L1741.0 522.79 L1744.0 522.70 L1747.0 522.65 L1750.0 522.63" fill="none" stroke="url(#halo)" stroke-width="12" stroke-linecap="round" filter="url(#blur)"/><path d="M469.0 551.00 L472.0 551.43 L475.0 551.86 L478.0 552.29 L481.0 552.71 L484.0 553.14 L487.0 553.57 L490.0 554.00 L493.0 554.43 L496.0 554.86 L499.0 555.29 L502.0 555.71 L505.0 556.14 L508.0 556.57 L511.0 557.00 L514.0 557.43 L517.0 557.86 L520.0 558.29 L523.0 558.73 L526.0 559.17 L529.0 559.63 L532.0 560.09 L535.0 560.58 L538.0 561.10 L541.0 561.65 L544.0 562.23 L547.0 562.85 L550.0 563.51 L553.0 564.22 L556.0 564.95 L559.0 565.71 L562.0 566.50 L565.0 567.30 L568.0 568.11 L571.0 568.93 L574.0 569.76 L577.0 570.59 L580.0 571.42 L583.0 572.25 L586.0 573.08 L589.0 573.91 L592.0 574.74 L595.0 575.57 L598.0 576.40 L601.0 577.23 L604.0 578.05 L607.0 578.87 L610.0 579.68 L613.0 580.48 L616.0 581.27 L619.0 582.05 L622.0 582.82 L625.0 583.58 L628.0 584.33 L631.0 585.07 L634.0 585.80 L637.0 586.52 L640.0 587.24 L643.0 587.95 L646.0 588.66 L649.0 589.37 L652.0 590.08 L655.0 590.78 L658.0 591.48 L661.0 592.17 L664.0 592.86 L667.0 593.55 L670.0 594.23 L673.0 594.91 L676.0 595.59 L679.0 596.26 L682.0 596.93 L685.0 597.59 L688.0 598.24 L691.0 598.89 L694.0 599.52 L697.0 600.13 L700.0 600.73 L703.0 601.31 L706.0 601.87 L709.0 602.42 L712.0 602.95 L715.0 603.48 L718.0 603.99 L721.0 604.50 L724.0 605.01 L727.0 605.51 L730.0 606.01 L733.0 606.51 L736.0 607.00 L739.0 607.49 L742.0 607.98 L745.0 608.46 L748.0 608.94 L751.0 609.42 L754.0 609.90 L757.0 610.37 L760.0 610.84 L763.0 611.31 L766.0 611.77 L769.0 612.22 L772.0 612.67 L775.0 613.11 L778.0 613.53 L781.0 613.95 L784.0 614.35 L787.0 614.74 L790.0 615.12 L793.0 615.49 L796.0 615.86 L799.0 616.22 L802.0 616.58 L805.0 616.93 L808.0 617.29 L811.0 617.64 L814.0 617.99 L817.0 618.35 L820.0 618.70 L823.0 619.05 L826.0 619.40 L829.0 619.76 L832.0 620.11 L835.0 620.46 L838.0 620.81 L841.0 621.16 L844.0 621.52 L847.0 621.86 L850.0 622.21 L853.0 622.56 L856.0 622.90 L859.0 623.24 L862.0 623.58 L865.0 623.91 L868.0 624.24 L871.0 624.57 L874.0 624.90 L877.0 625.22 L880.0 625.54 L883.0 625.86 L886.0 626.18 L889.0 626.50 L892.0 626.81 L895.0 627.12 L898.0 627.42 L901.0 627.72 L904.0 628.01 L907.0 628.29 L910.0 628.58 L913.0 628.85 L916.0 629.13 L919.0 629.40 L922.0 629.67 L925.0 629.94 L928.0 630.21 L931.0 630.47 L934.0 630.73 L937.0 630.99 L940.0 631.24 L943.0 631.49 L946.0 631.74 L949.0 631.98 L952.0 632.22 L955.0 632.45 L958.0 632.69 L961.0 632.92 L964.0 633.15 L967.0 633.38 L970.0 633.60 L973.0 633.82 L976.0 634.04 L979.0 634.25 L982.0 634.45 L985.0 634.65 L988.0 634.85 L991.0 635.04 L994.0 635.23 L997.0 635.41 L1000.0 635.59 L1003.0 635.76 L1006.0 635.93 L1009.0 636.10 L1012.0 636.25 L1015.0 636.40 L1018.0 636.54 L1021.0 636.66 L1024.0 636.78 L1027.0 636.88 L1030.0 636.97 L1033.0 637.06 L1036.0 637.14 L1039.0 637.21 L1042.0 637.28 L1045.0 637.35 L1048.0 637.41 L1051.0 637.46 L1054.0 637.51 L1057.0 637.56 L1060.0 637.59 L1063.0 637.62 L1066.0 637.65 L1069.0 637.67 L1072.0 637.68 L1075.0 637.69 L1078.0 637.69 L1081.0 637.69 L1084.0 637.69 L1087.0 637.69 L1090.0 637.69 L1093.0 637.68 L1096.0 637.67 L1099.0 637.66 L1102.0 637.64 L1105.0 637.62 L1108.0 637.60 L1111.0 637.58 L1114.0 637.55 L1117.0 637.53 L1120.0 637.50 L1123.0 637.47 L1126.0 637.44 L1129.0 637.41 L1132.0 637.38 L1135.0 637.34 L1138.0 637.31 L1141.0 637.28 L1144.0 637.24 L1147.0 637.21 L1150.0 637.17 L1153.0 637.14 L1156.0 637.10 L1159.0 637.06 L1162.0 637.02 L1165.0 636.99 L1168.0 636.95 L1171.0 636.91 L1174.0 636.87 L1177.0 636.84 L1180.0 636.80 L1183.0 636.76 L1186.0 636.73 L1189.0 636.69 L1192.0 636.65 L1195.0 636.61 L1198.0 636.58 L1201.0 636.54 L1204.0 636.50 L1207.0 636.47 L1210.0 636.43 L1213.0 636.40 L1216.0 636.37 L1219.0 636.33 L1222.0 636.30 L1225.0 636.28 L1228.0 636.25 L1231.0 636.22 L1234.0 636.20 L1237.0 636.17 L1240.0 636.15 L1243.0 636.13 L1246.0 636.10 L1249.0 636.07 L1252.0 636.05 L1255.0 636.02 L1258.0 635.99 L1261.0 635.95 L1264.0 635.92 L1267.0 635.88 L1270.0 635.84 L1273.0 635.80 L1276.0 635.75 L1279.0 635.71 L1282.0 635.66 L1285.0 635.60 L1288.0 635.54 L1291.0 635.48 L1294.0 635.40 L1297.0 635.32 L1300.0 635.22 L1303.0 635.12 L1306.0 635.00 L1309.0 634.87 L1312.0 634.73 L1315.0 634.59 L1318.0 634.44 L1321.0 634.29 L1324.0 634.13 L1327.0 633.96 L1330.0 633.80 L1333.0 633.63 L1336.0 633.45 L1339.0 633.27 L1342.0 633.08 L1345.0 632.88 L1348.0 632.68 L1351.0 632.48 L1354.0 632.27 L1357.0 632.06 L1360.0 631.85 L1363.0 631.63 L1366.0 631.41 L1369.0 631.20 L1372.0 630.98 L1375.0 630.76 L1378.0 630.55 L1381.0 630.33 L1384.0 630.11 L1387.0 629.89 L1390.0 629.67 L1393.0 629.46 L1396.0 629.23 L1399.0 629.01 L1402.0 628.78 L1405.0 628.55 L1408.0 628.31 L1411.0 628.06 L1414.0 627.79 L1417.0 627.51 L1420.0 627.20 L1423.0 626.88 L1426.0 626.54 L1429.0 626.19 L1432.0 625.82 L1435.0 625.44 L1438.0 625.05 L1441.0 624.65 L1444.0 624.26 L1447.0 623.85 L1450.0 623.45 L1453.0 623.05 L1456.0 622.65 L1459.0 622.25 L1462.0 621.84 L1465.0 621.44 L1468.0 621.04 L1471.0 620.65 L1474.0 620.25 L1477.0 619.85 L1480.0 619.45 L1483.0 619.06 L1486.0 618.67 L1489.0 618.27 L1492.0 617.89 L1495.0 617.50 L1498.0 617.12 L1501.0 616.75 L1504.0 616.38 L1507.0 616.01 L1510.0 615.64 L1513.0 615.28 L1516.0 614.93 L1519.0 614.57 L1522.0 614.21 L1525.0 613.86 L1528.0 613.50 L1531.0 613.14 L1534.0 612.78 L1537.0 612.42 L1540.0 612.05 L1543.0 611.68 L1546.0 611.31 L1549.0 610.94 L1552.0 610.56 L1555.0 610.18 L1558.0 609.80 L1561.0 609.41 L1564.0 609.03 L1567.0 608.64 L1570.0 608.24 L1573.0 607.84 L1576.0 607.43 L1579.0 607.02 L1582.0 606.60 L1585.0 606.17 L1588.0 605.73 L1591.0 605.29 L1594.0 604.85 L1597.0 604.39 L1600.0 603.94 L1603.0 603.48 L1606.0 603.02 L1609.0 602.55 L1612.0 602.07 L1615.0 601.60 L1618.0 601.11 L1621.0 600.62 L1624.0 600.11 L1627.0 599.61 L1630.0 599.09 L1633.0 598.57 L1636.0 598.04 L1639.0 597.50 L1642.0 596.96 L1645.0 596.41 L1648.0 595.84 L1651.0 595.26 L1654.0 594.65 L1657.0 594.02 L1660.0 593.36 L1663.0 592.68 L1666.0 591.96 L1669.0 591.23 L1672.0 590.47 L1675.0 589.69 L1678.0 588.89 L1681.0 588.08 L1684.0 587.24 L1687.0 586.39 L1690.0 585.51 L1693.0 584.60 L1696.0 583.66 L1699.0 582.67 L1702.0 581.64 L1705.0 580.57 L1708.0 579.47 L1711.0 578.32 L1714.0 577.15 L1717.0 575.94 L1720.0 574.71 L1723.0 573.45 L1726.0 572.16 L1729.0 570.82 L1732.0 569.43 L1735.0 567.98 L1738.0 566.46 L1741.0 564.86 L1744.0 563.19 L1747.0 561.45 L1750.0 559.65 L1753.0 557.79" fill="none" stroke="url(#halo)" stroke-width="12" stroke-linecap="round" filter="url(#blur)"/><path d="M468.0 564.41 L471.0 564.78 L474.0 565.16 L477.0 565.55 L480.0 565.95 L483.0 566.36 L486.0 566.79 L489.0 567.23 L492.0 567.70 L495.0 568.18 L498.0 568.67 L501.0 569.18 L504.0 569.70 L507.0 570.22 L510.0 570.75 L513.0 571.29 L516.0 571.82 L519.0 572.36 L522.0 572.91 L525.0 573.46 L528.0 574.02 L531.0 574.59 L534.0 575.19 L537.0 575.80 L540.0 576.46 L543.0 577.14 L546.0 577.87 L549.0 578.65 L552.0 579.46 L555.0 580.31 L558.0 581.20 L561.0 582.11 L564.0 583.04 L567.0 583.98 L570.0 584.93 L573.0 585.89 L576.0 586.85 L579.0 587.81 L582.0 588.78 L585.0 589.74 L588.0 590.71 L591.0 591.67 L594.0 592.63 L597.0 593.59 L600.0 594.54 L603.0 595.48 L606.0 596.41 L609.0 597.31 L612.0 598.20 L615.0 599.05 L618.0 599.86 L621.0 600.64 L624.0 601.38 L627.0 602.08 L630.0 602.75 L633.0 603.40 L636.0 604.02 L639.0 604.63 L642.0 605.24 L645.0 605.84 L648.0 606.45 L651.0 607.07 L654.0 607.71 L657.0 608.36 L660.0 609.03 L663.0 609.72 L666.0 610.44 L669.0 611.17 L672.0 611.91 L675.0 612.67 L678.0 613.43 L681.0 614.20 L684.0 614.95 L687.0 615.70 L690.0 616.43 L693.0 617.14 L696.0 617.82 L699.0 618.48 L702.0 619.10 L705.0 619.69 L708.0 620.25 L711.0 620.78 L714.0 621.29 L717.0 621.79 L720.0 622.27 L723.0 622.74 L726.0 623.21 L729.0 623.67 L732.0 624.12 L735.0 624.57 L738.0 625.01 L741.0 625.45 L744.0 625.88 L747.0 626.30 L750.0 626.72 L753.0 627.14 L756.0 627.55 L759.0 627.96 L762.0 628.36 L765.0 628.77 L768.0 629.17 L771.0 629.57 L774.0 629.97 L777.0 630.36 L780.0 630.75 L783.0 631.14 L786.0 631.53 L789.0 631.91 L792.0 632.29 L795.0 632.67 L798.0 633.05 L801.0 633.42 L804.0 633.80 L807.0 634.17 L810.0 634.54 L813.0 634.91 L816.0 635.28 L819.0 635.65 L822.0 636.02 L825.0 636.39 L828.0 636.75 L831.0 637.11 L834.0 637.48 L837.0 637.84 L840.0 638.20 L843.0 638.56 L846.0 638.93 L849.0 639.29 L852.0 639.66 L855.0 640.03 L858.0 640.41 L861.0 640.79 L864.0 641.17 L867.0 641.55 L870.0 641.94 L873.0 642.33 L876.0 642.73 L879.0 643.12 L882.0 643.52 L885.0 643.92 L888.0 644.32 L891.0 644.72 L894.0 645.12 L897.0 645.53 L900.0 645.94 L903.0 646.35 L906.0 646.76 L909.0 647.17 L912.0 647.59 L915.0 648.00 L918.0 648.41 L921.0 648.83 L924.0 649.23 L927.0 649.63 L930.0 650.03 L933.0 650.41 L936.0 650.77 L939.0 651.12 L942.0 651.46 L945.0 651.78 L948.0 652.08 L951.0 652.37 L954.0 652.65 L957.0 652.92 L960.0 653.18 L963.0 653.44 L966.0 653.69 L969.0 653.94 L972.0 654.17 L975.0 654.41 L978.0 654.63 L981.0 654.85 L984.0 655.06 L987.0 655.27 L990.0 655.47 L993.0 655.66 L996.0 655.85 L999.0 656.03 L1002.0 656.21 L1005.0 656.38 L1008.0 656.56 L1011.0 656.72 L1014.0 656.88 L1017.0 657.04 L1020.0 657.18 L1023.0 657.32 L1026.0 657.45 L1029.0 657.58 L1032.0 657.70 L1035.0 657.81 L1038.0 657.92 L1041.0 658.03 L1044.0 658.14 L1047.0 658.24 L1050.0 658.35 L1053.0 658.45 L1056.0 658.56 L1059.0 658.67 L1062.0 658.77 L1065.0 658.87 L1068.0 658.98 L1071.0 659.08 L1074.0 659.19 L1077.0 659.29 L1080.0 659.39 L1083.0 659.49 L1086.0 659.58 L1089.0 659.66 L1092.0 659.74 L1095.0 659.80 L1098.0 659.86 L1101.0 659.90 L1104.0 659.92 L1107.0 659.94 L1110.0 659.94 L1113.0 659.93 L1116.0 659.92 L1119.0 659.91 L1122.0 659.89 L1125.0 659.87 L1128.0 659.86 L1131.0 659.86 L1134.0 659.86 L1137.0 659.88 L1140.0 659.91 L1143.0 659.96 L1146.0 660.01 L1149.0 660.08 L1152.0 660.16 L1155.0 660.25 L1158.0 660.35 L1161.0 660.45 L1164.0 660.56 L1167.0 660.68 L1170.0 660.80 L1173.0 660.93 L1176.0 661.07 L1179.0 661.23 L1182.0 661.39 L1185.0 661.56 L1188.0 661.75 L1191.0 661.94 L1194.0 662.13 L1197.0 662.33 L1200.0 662.53 L1203.0 662.72 L1206.0 662.90 L1209.0 663.05 L1212.0 663.19 L1215.0 663.29 L1218.0 663.36 L1221.0 663.39 L1224.0 663.38 L1227.0 663.33 L1230.0 663.25 L1233.0 663.14 L1236.0 663.02 L1239.0 662.87 L1242.0 662.71 L1245.0 662.55 L1248.0 662.38 L1251.0 662.20 L1254.0 662.02 L1257.0 661.84 L1260.0 661.65 L1263.0 661.46 L1266.0 661.27 L1269.0 661.08 L1272.0 660.88 L1275.0 660.68 L1278.0 660.48 L1281.0 660.28 L1284.0 660.08 L1287.0 659.88 L1290.0 659.67 L1293.0 659.47 L1296.0 659.26 L1299.0 659.06 L1302.0 658.85 L1305.0 658.64 L1308.0 658.44 L1311.0 658.23 L1314.0 658.02 L1317.0 657.81 L1320.0 657.60 L1323.0 657.39 L1326.0 657.18 L1329.0 656.97 L1332.0 656.76 L1335.0 656.55 L1338.0 656.34 L1341.0 656.13 L1344.0 655.92 L1347.0 655.71 L1350.0 655.50 L1353.0 655.29 L1356.0 655.08 L1359.0 654.87 L1362.0 654.65 L1365.0 654.44 L1368.0 654.22 L1371.0 654.00 L1374.0 653.77 L1377.0 653.54 L1380.0 653.31 L1383.0 653.06 L1386.0 652.81 L1389.0 652.56 L1392.0 652.30 L1395.0 652.04 L1398.0 651.78 L1401.0 651.51 L1404.0 651.25 L1407.0 650.98 L1410.0 650.72 L1413.0 650.46 L1416.0 650.21 L1419.0 649.95 L1422.0 649.71 L1425.0 649.47 L1428.0 649.23 L1431.0 648.99 L1434.0 648.76 L1437.0 648.53 L1440.0 648.31 L1443.0 648.08 L1446.0 647.86 L1449.0 647.64 L1452.0 647.42 L1455.0 647.20 L1458.0 646.99 L1461.0 646.78 L1464.0 646.57 L1467.0 646.37 L1470.0 646.16 L1473.0 645.96 L1476.0 645.76 L1479.0 645.56 L1482.0 645.36 L1485.0 645.16 L1488.0 644.96 L1491.0 644.75 L1494.0 644.54 L1497.0 644.33 L1500.0 644.11 L1503.0 643.88 L1506.0 643.64 L1509.0 643.40 L1512.0 643.16 L1515.0 642.91 L1518.0 642.66 L1521.0 642.40 L1524.0 642.14 L1527.0 641.87 L1530.0 641.60 L1533.0 641.31 L1536.0 641.02 L1539.0 640.71 L1542.0 640.40 L1545.0 640.07 L1548.0 639.73 L1551.0 639.38 L1554.0 639.02 L1557.0 638.65 L1560.0 638.26 L1563.0 637.87 L1566.0 637.46 L1569.0 637.04 L1572.0 636.58 L1575.0 636.10 L1578.0 635.59 L1581.0 635.04 L1584.0 634.46 L1587.0 633.84 L1590.0 633.19 L1593.0 632.52 L1596.0 631.82 L1599.0 631.11 L1602.0 630.40 L1605.0 629.67 L1608.0 628.95 L1611.0 628.22 L1614.0 627.50 L1617.0 626.78 L1620.0 626.06 L1623.0 625.34 L1626.0 624.63 L1629.0 623.93 L1632.0 623.22 L1635.0 622.52 L1638.0 621.81 L1641.0 621.10 L1644.0 620.39 L1647.0 619.68 L1650.0 618.95 L1653.0 618.21 L1656.0 617.46 L1659.0 616.70 L1662.0 615.91 L1665.0 615.12 L1668.0 614.30 L1671.0 613.47 L1674.0 612.63 L1677.0 611.78 L1680.0 610.93 L1683.0 610.06 L1686.0 609.19 L1689.0 608.30 L1692.0 607.41 L1695.0 606.50 L1698.0 605.57 L1701.0 604.64 L1704.0 603.68 L1707.0 602.71 L1710.0 601.73 L1713.0 600.73 L1716.0 599.71 L1719.0 598.68 L1722.0 597.62 L1725.0 596.53 L1728.0 595.40 L1731.0 594.22 L1734.0 592.98 L1737.0 591.66 L1740.0 590.25 L1743.0 588.76 L1746.0 587.19 L1749.0 585.54 L1752.0 583.83 L1755.0 582.06" fill="none" stroke="url(#halo)" stroke-width="12" stroke-linecap="round" filter="url(#blur)"/><path d="M469.0 532.0020181705098 L481.0 533.2020181705099" fill="none" stroke="#d0e0ff" stroke-width="6.5" stroke-linecap="round" opacity="0.9"/><path d="M469.0 551.0 L481.0 552.2" fill="none" stroke="#d0e0ff" stroke-width="6.5" stroke-linecap="round" opacity="0.9"/><path d="M468.0 564.4132020008495 L480.0 565.6132020008496" fill="none" stroke="#d0e0ff" stroke-width="6.5" stroke-linecap="round" opacity="0.9"/><path d="M469.0 532.00 L472.0 532.36 L475.0 532.71 L478.0 533.07 L481.0 533.42 L484.0 533.78 L487.0 534.15 L490.0 534.51 L493.0 534.88 L496.0 535.25 L499.0 535.62 L502.0 535.99 L505.0 536.36 L508.0 536.74 L511.0 537.12 L514.0 537.49 L517.0 537.87 L520.0 538.25 L523.0 538.63 L526.0 539.02 L529.0 539.41 L532.0 539.82 L535.0 540.24 L538.0 540.67 L541.0 541.13 L544.0 541.62 L547.0 542.13 L550.0 542.67 L553.0 543.23 L556.0 543.82 L559.0 544.42 L562.0 545.04 L565.0 545.67 L568.0 546.31 L571.0 546.96 L574.0 547.61 L577.0 548.26 L580.0 548.91 L583.0 549.56 L586.0 550.21 L589.0 550.86 L592.0 551.52 L595.0 552.17 L598.0 552.82 L601.0 553.47 L604.0 554.12 L607.0 554.77 L610.0 555.41 L613.0 556.05 L616.0 556.69 L619.0 557.33 L622.0 557.96 L625.0 558.59 L628.0 559.22 L631.0 559.84 L634.0 560.46 L637.0 561.08 L640.0 561.70 L643.0 562.32 L646.0 562.94 L649.0 563.57 L652.0 564.20 L655.0 564.83 L658.0 565.47 L661.0 566.11 L664.0 566.76 L667.0 567.42 L670.0 568.08 L673.0 568.74 L676.0 569.40 L679.0 570.06 L682.0 570.72 L685.0 571.37 L688.0 572.01 L691.0 572.63 L694.0 573.23 L697.0 573.80 L700.0 574.35 L703.0 574.87 L706.0 575.36 L709.0 575.82 L712.0 576.27 L715.0 576.69 L718.0 577.11 L721.0 577.51 L724.0 577.90 L727.0 578.29 L730.0 578.68 L733.0 579.06 L736.0 579.43 L739.0 579.81 L742.0 580.17 L745.0 580.53 L748.0 580.89 L751.0 581.25 L754.0 581.60 L757.0 581.95 L760.0 582.30 L763.0 582.65 L766.0 583.00 L769.0 583.35 L772.0 583.70 L775.0 584.05 L778.0 584.41 L781.0 584.77 L784.0 585.13 L787.0 585.50 L790.0 585.86 L793.0 586.23 L796.0 586.61 L799.0 586.98 L802.0 587.36 L805.0 587.74 L808.0 588.12 L811.0 588.50 L814.0 588.89 L817.0 589.28 L820.0 589.68" fill="none" stroke="url(#gA)" stroke-width="5.2" stroke-linecap="round"/><path d="M700.0 574.35 L703.0 574.87 L706.0 575.36 L709.0 575.82 L712.0 576.27 L715.0 576.69 L718.0 577.11 L721.0 577.51 L724.0 577.90 L727.0 578.29 L730.0 578.68 L733.0 579.06 L736.0 579.43 L739.0 579.81 L742.0 580.17 L745.0 580.53 L748.0 580.89 L751.0 581.25 L754.0 581.60 L757.0 581.95 L760.0 582.30 L763.0 582.65 L766.0 583.00 L769.0 583.35 L772.0 583.70 L775.0 584.05 L778.0 584.41 L781.0 584.77 L784.0 585.13 L787.0 585.50 L790.0 585.86 L793.0 586.23 L796.0 586.61 L799.0 586.98 L802.0 587.36 L805.0 587.74 L808.0 588.12 L811.0 588.50 L814.0 588.89 L817.0 589.28 L820.0 589.68 L823.0 590.09 L826.0 590.50 L829.0 590.91 L832.0 591.33 L835.0 591.75 L838.0 592.17 L841.0 592.59 L844.0 593.02 L847.0 593.44 L850.0 593.86 L853.0 594.28 L856.0 594.69 L859.0 595.10 L862.0 595.51 L865.0 595.92 L868.0 596.32 L871.0 596.72 L874.0 597.11 L877.0 597.50 L880.0 597.89 L883.0 598.28 L886.0 598.67 L889.0 599.06 L892.0 599.44 L895.0 599.82 L898.0 600.20 L901.0 600.58 L904.0 600.95 L907.0 601.32 L910.0 601.69 L913.0 602.05 L916.0 602.41 L919.0 602.77 L922.0 603.13 L925.0 603.48 L928.0 603.82 L931.0 604.16 L934.0 604.49 L937.0 604.81 L940.0 605.12 L943.0 605.42 L946.0 605.71 L949.0 605.98 L952.0 606.25 L955.0 606.51 L958.0 606.77 L961.0 607.02 L964.0 607.27 L967.0 607.51 L970.0 607.74 L973.0 607.98 L976.0 608.20 L979.0 608.42 L982.0 608.63 L985.0 608.84 L988.0 609.04 L991.0 609.23 L994.0 609.42 L997.0 609.60 L1000.0 609.78 L1003.0 609.96 L1006.0 610.12 L1009.0 610.28 L1012.0 610.43 L1015.0 610.56 L1018.0 610.68 L1021.0 610.78 L1024.0 610.87 L1027.0 610.94 L1030.0 611.00 L1033.0 611.05 L1036.0 611.09 L1039.0 611.12 L1042.0 611.15 L1045.0 611.17 L1048.0 611.19 L1051.0 611.20 L1054.0 611.20 L1057.0 611.20 L1060.0 611.19 L1063.0 611.18 L1066.0 611.16 L1069.0 611.13 L1072.0 611.10 L1075.0 611.06 L1078.0 611.02 L1081.0 610.97 L1084.0 610.91 L1087.0 610.85 L1090.0 610.78 L1093.0 610.70 L1096.0 610.61 L1099.0 610.50" fill="none" stroke="url(#gA)" stroke-width="4.7" stroke-linecap="round"/><path d="M469.0 532.00 L472.0 532.36 L475.0 532.71 L478.0 533.07 L481.0 533.42 L484.0 533.78 L487.0 534.15 L490.0 534.51 L493.0 534.88 L496.0 535.25 L499.0 535.62 L502.0 535.99 L505.0 536.36 L508.0 536.74 L511.0 537.12 L514.0 537.49 L517.0 537.87 L520.0 538.25 L523.0 538.63 L526.0 539.02 L529.0 539.41 L532.0 539.82 L535.0 540.24 L538.0 540.67 L541.0 541.13 L544.0 541.62 L547.0 542.13 L550.0 542.67 L553.0 543.23 L556.0 543.82 L559.0 544.42 L562.0 545.04 L565.0 545.67 L568.0 546.31 L571.0 546.96 L574.0 547.61 L577.0 548.26 L580.0 548.91 L583.0 549.56 L586.0 550.21 L589.0 550.86 L592.0 551.52 L595.0 552.17 L598.0 552.82 L601.0 553.47 L604.0 554.12 L607.0 554.77 L610.0 555.41 L613.0 556.05 L616.0 556.69 L619.0 557.33 L622.0 557.96 L625.0 558.59 L628.0 559.22 L631.0 559.84 L634.0 560.46 L637.0 561.08 L640.0 561.70 L643.0 562.32 L646.0 562.94 L649.0 563.57 L652.0 564.20 L655.0 564.83 L658.0 565.47 L661.0 566.11 L664.0 566.76 L667.0 567.42 L670.0 568.08 L673.0 568.74 L676.0 569.40 L679.0 570.06 L682.0 570.72 L685.0 571.37 L688.0 572.01 L691.0 572.63 L694.0 573.23 L697.0 573.80 L700.0 574.35 L703.0 574.87 L706.0 575.36 L709.0 575.82 L712.0 576.27 L715.0 576.69 L718.0 577.11 L721.0 577.51 L724.0 577.90 L727.0 578.29 L730.0 578.68 L733.0 579.06 L736.0 579.43 L739.0 579.81 L742.0 580.17 L745.0 580.53 L748.0 580.89 L751.0 581.25 L754.0 581.60 L757.0 581.95 L760.0 582.30 L763.0 582.65 L766.0 583.00 L769.0 583.35 L772.0 583.70 L775.0 584.05 L778.0 584.41 L781.0 584.77 L784.0 585.13 L787.0 585.50 L790.0 585.86 L793.0 586.23 L796.0 586.61 L799.0 586.98 L802.0 587.36 L805.0 587.74 L808.0 588.12 L811.0 588.50 L814.0 588.89 L817.0 589.28 L820.0 589.68 L823.0 590.09 L826.0 590.50 L829.0 590.91 L832.0 591.33 L835.0 591.75 L838.0 592.17 L841.0 592.59 L844.0 593.02 L847.0 593.44 L850.0 593.86 L853.0 594.28 L856.0 594.69 L859.0 595.10 L862.0 595.51 L865.0 595.92 L868.0 596.32 L871.0 596.72 L874.0 597.11 L877.0 597.50 L880.0 597.89 L883.0 598.28 L886.0 598.67 L889.0 599.06 L892.0 599.44 L895.0 599.82 L898.0 600.20 L901.0 600.58 L904.0 600.95 L907.0 601.32 L910.0 601.69 L913.0 602.05 L916.0 602.41 L919.0 602.77 L922.0 603.13 L925.0 603.48 L928.0 603.82 L931.0 604.16 L934.0 604.49 L937.0 604.81 L940.0 605.12 L943.0 605.42 L946.0 605.71 L949.0 605.98 L952.0 606.25 L955.0 606.51 L958.0 606.77 L961.0 607.02 L964.0 607.27 L967.0 607.51 L970.0 607.74 L973.0 607.98 L976.0 608.20 L979.0 608.42 L982.0 608.63 L985.0 608.84 L988.0 609.04 L991.0 609.23 L994.0 609.42 L997.0 609.60 L1000.0 609.78 L1003.0 609.96 L1006.0 610.12 L1009.0 610.28 L1012.0 610.43 L1015.0 610.56 L1018.0 610.68 L1021.0 610.78 L1024.0 610.87 L1027.0 610.94 L1030.0 611.00 L1033.0 611.05 L1036.0 611.09 L1039.0 611.12 L1042.0 611.15 L1045.0 611.17 L1048.0 611.19 L1051.0 611.20 L1054.0 611.20 L1057.0 611.20 L1060.0 611.19 L1063.0 611.18 L1066.0 611.16 L1069.0 611.13 L1072.0 611.10 L1075.0 611.06 L1078.0 611.02 L1081.0 610.97 L1084.0 610.91 L1087.0 610.85 L1090.0 610.78 L1093.0 610.70 L1096.0 610.61 L1099.0 610.50 L1102.0 610.38 L1105.0 610.24 L1108.0 610.09 L1111.0 609.93 L1114.0 609.75 L1117.0 609.57 L1120.0 609.39 L1123.0 609.20 L1126.0 609.00 L1129.0 608.81 L1132.0 608.61 L1135.0 608.41 L1138.0 608.21 L1141.0 608.01 L1144.0 607.80 L1147.0 607.60 L1150.0 607.39 L1153.0 607.19 L1156.0 606.98 L1159.0 606.77 L1162.0 606.57 L1165.0 606.36 L1168.0 606.16 L1171.0 605.96 L1174.0 605.77 L1177.0 605.59 L1180.0 605.41 L1183.0 605.23 L1186.0 605.07 L1189.0 604.91 L1192.0 604.75 L1195.0 604.60 L1198.0 604.45 L1201.0 604.29 L1204.0 604.14 L1207.0 603.98 L1210.0 603.81 L1213.0 603.63 L1216.0 603.45 L1219.0 603.24 L1222.0 603.03 L1225.0 602.80 L1228.0 602.55 L1231.0 602.30 L1234.0 602.04 L1237.0 601.76 L1240.0 601.48 L1243.0 601.20 L1246.0 600.91 L1249.0 600.62 L1252.0 600.32 L1255.0 600.01 L1258.0 599.70 L1261.0 599.39 L1264.0 599.06 L1267.0 598.73 L1270.0 598.39 L1273.0 598.05 L1276.0 597.70 L1279.0 597.35 L1282.0 596.99 L1285.0 596.62 L1288.0 596.24 L1291.0 595.85 L1294.0 595.45 L1297.0 595.02 L1300.0 594.58 L1303.0 594.12 L1306.0 593.63 L1309.0 593.13 L1312.0 592.62 L1315.0 592.09 L1318.0 591.56 L1321.0 591.02 L1324.0 590.48 L1327.0 589.95 L1330.0 589.42 L1333.0 588.91 L1336.0 588.41 L1339.0 587.92 L1342.0 587.45 L1345.0 587.00 L1348.0 586.56 L1351.0 586.13 L1354.0 585.72 L1357.0 585.31 L1360.0 584.92 L1363.0 584.53 L1366.0 584.14 L1369.0 583.76 L1372.0 583.38 L1375.0 583.01 L1378.0 582.65 L1381.0 582.29 L1384.0 581.94 L1387.0 581.59 L1390.0 581.25 L1393.0 580.92 L1396.0 580.59 L1399.0 580.25 L1402.0 579.92 L1405.0 579.58 L1408.0 579.24 L1411.0 578.88 L1414.0 578.51 L1417.0 578.13 L1420.0 577.73 L1423.0 577.31 L1426.0 576.88 L1429.0 576.43 L1432.0 575.97 L1435.0 575.49 L1438.0 575.01 L1441.0 574.53 L1444.0 574.04 L1447.0 573.56 L1450.0 573.07 L1453.0 572.59 L1456.0 572.11 L1459.0 571.63 L1462.0 571.16 L1465.0 570.69 L1468.0 570.23 L1471.0 569.77 L1474.0 569.31 L1477.0 568.85 L1480.0 568.40 L1483.0 567.94 L1486.0 567.49 L1489.0 567.03 L1492.0 566.57 L1495.0 566.10 L1498.0 565.63 L1501.0 565.16 L1504.0 564.68 L1507.0 564.19 L1510.0 563.70 L1513.0 563.21 L1516.0 562.71 L1519.0 562.20 L1522.0 561.70 L1525.0 561.18 L1528.0 560.66 L1531.0 560.13 L1534.0 559.59 L1537.0 559.04 L1540.0 558.48 L1543.0 557.89 L1546.0 557.30 L1549.0 556.69 L1552.0 556.08 L1555.0 555.45 L1558.0 554.82 L1561.0 554.19 L1564.0 553.55 L1567.0 552.92 L1570.0 552.30 L1573.0 551.68 L1576.0 551.07 L1579.0 550.48 L1582.0 549.89 L1585.0 549.31 L1588.0 548.75 L1591.0 548.19 L1594.0 547.64 L1597.0 547.10 L1600.0 546.55 L1603.0 546.01 L1606.0 545.47 L1609.0 544.93 L1612.0 544.38 L1615.0 543.83 L1618.0 543.27 L1621.0 542.70 L1624.0 542.13 L1627.0 541.55 L1630.0 540.97 L1633.0 540.38 L1636.0 539.79 L1639.0 539.19 L1642.0 538.59 L1645.0 537.99 L1648.0 537.39 L1651.0 536.78 L1654.0 536.17 L1657.0 535.56 L1660.0 534.94 L1663.0 534.32 L1666.0 533.70 L1669.0 533.07 L1672.0 532.44 L1675.0 531.81 L1678.0 531.19 L1681.0 530.56 L1684.0 529.95 L1687.0 529.35 L1690.0 528.77 L1693.0 528.20 L1696.0 527.67 L1699.0 527.16 L1702.0 526.69 L1705.0 526.24 L1708.0 525.83 L1711.0 525.44 L1714.0 525.08 L1717.0 524.73 L1720.0 524.40 L1723.0 524.09 L1726.0 523.80 L1729.0 523.54 L1732.0 523.30 L1735.0 523.09 L1738.0 522.92 L1741.0 522.79 L1744.0 522.70 L1747.0 522.65 L1750.0 522.63" fill="none" stroke="url(#gA)" stroke-width="4.2" stroke-linecap="round"/><path d="M469.0 551.00 L472.0 551.43 L475.0 551.86 L478.0 552.29 L481.0 552.71 L484.0 553.14 L487.0 553.57 L490.0 554.00 L493.0 554.43 L496.0 554.86 L499.0 555.29 L502.0 555.71 L505.0 556.14 L508.0 556.57 L511.0 557.00 L514.0 557.43 L517.0 557.86 L520.0 558.29 L523.0 558.73 L526.0 559.17 L529.0 559.63 L532.0 560.09 L535.0 560.58 L538.0 561.10 L541.0 561.65 L544.0 562.23 L547.0 562.85 L550.0 563.51 L553.0 564.22 L556.0 564.95 L559.0 565.71 L562.0 566.50 L565.0 567.30 L568.0 568.11 L571.0 568.93 L574.0 569.76 L577.0 570.59 L580.0 571.42 L583.0 572.25 L586.0 573.08 L589.0 573.91 L592.0 574.74 L595.0 575.57 L598.0 576.40 L601.0 577.23 L604.0 578.05 L607.0 578.87 L610.0 579.68 L613.0 580.48 L616.0 581.27 L619.0 582.05 L622.0 582.82 L625.0 583.58 L628.0 584.33 L631.0 585.07 L634.0 585.80 L637.0 586.52 L640.0 587.24 L643.0 587.95 L646.0 588.66 L649.0 589.37 L652.0 590.08 L655.0 590.78 L658.0 591.48 L661.0 592.17 L664.0 592.86 L667.0 593.55 L670.0 594.23 L673.0 594.91 L676.0 595.59 L679.0 596.26 L682.0 596.93 L685.0 597.59 L688.0 598.24 L691.0 598.89 L694.0 599.52 L697.0 600.13 L700.0 600.73 L703.0 601.31 L706.0 601.87 L709.0 602.42 L712.0 602.95 L715.0 603.48 L718.0 603.99 L721.0 604.50 L724.0 605.01 L727.0 605.51 L730.0 606.01 L733.0 606.51 L736.0 607.00 L739.0 607.49 L742.0 607.98 L745.0 608.46 L748.0 608.94 L751.0 609.42 L754.0 609.90 L757.0 610.37 L760.0 610.84 L763.0 611.31 L766.0 611.77 L769.0 612.22 L772.0 612.67 L775.0 613.11 L778.0 613.53 L781.0 613.95 L784.0 614.35 L787.0 614.74 L790.0 615.12 L793.0 615.49 L796.0 615.86 L799.0 616.22 L802.0 616.58 L805.0 616.93 L808.0 617.29 L811.0 617.64 L814.0 617.99 L817.0 618.35 L820.0 618.70" fill="none" stroke="url(#gB)" stroke-width="5.2" stroke-linecap="round"/><path d="M700.0 600.73 L703.0 601.31 L706.0 601.87 L709.0 602.42 L712.0 602.95 L715.0 603.48 L718.0 603.99 L721.0 604.50 L724.0 605.01 L727.0 605.51 L730.0 606.01 L733.0 606.51 L736.0 607.00 L739.0 607.49 L742.0 607.98 L745.0 608.46 L748.0 608.94 L751.0 609.42 L754.0 609.90 L757.0 610.37 L760.0 610.84 L763.0 611.31 L766.0 611.77 L769.0 612.22 L772.0 612.67 L775.0 613.11 L778.0 613.53 L781.0 613.95 L784.0 614.35 L787.0 614.74 L790.0 615.12 L793.0 615.49 L796.0 615.86 L799.0 616.22 L802.0 616.58 L805.0 616.93 L808.0 617.29 L811.0 617.64 L814.0 617.99 L817.0 618.35 L820.0 618.70 L823.0 619.05 L826.0 619.40 L829.0 619.76 L832.0 620.11 L835.0 620.46 L838.0 620.81 L841.0 621.16 L844.0 621.52 L847.0 621.86 L850.0 622.21 L853.0 622.56 L856.0 622.90 L859.0 623.24 L862.0 623.58 L865.0 623.91 L868.0 624.24 L871.0 624.57 L874.0 624.90 L877.0 625.22 L880.0 625.54 L883.0 625.86 L886.0 626.18 L889.0 626.50 L892.0 626.81 L895.0 627.12 L898.0 627.42 L901.0 627.72 L904.0 628.01 L907.0 628.29 L910.0 628.58 L913.0 628.85 L916.0 629.13 L919.0 629.40 L922.0 629.67 L925.0 629.94 L928.0 630.21 L931.0 630.47 L934.0 630.73 L937.0 630.99 L940.0 631.24 L943.0 631.49 L946.0 631.74 L949.0 631.98 L952.0 632.22 L955.0 632.45 L958.0 632.69 L961.0 632.92 L964.0 633.15 L967.0 633.38 L970.0 633.60 L973.0 633.82 L976.0 634.04 L979.0 634.25 L982.0 634.45 L985.0 634.65 L988.0 634.85 L991.0 635.04 L994.0 635.23 L997.0 635.41 L1000.0 635.59 L1003.0 635.76 L1006.0 635.93 L1009.0 636.10 L1012.0 636.25 L1015.0 636.40 L1018.0 636.54 L1021.0 636.66 L1024.0 636.78 L1027.0 636.88 L1030.0 636.97 L1033.0 637.06 L1036.0 637.14 L1039.0 637.21 L1042.0 637.28 L1045.0 637.35 L1048.0 637.41 L1051.0 637.46 L1054.0 637.51 L1057.0 637.56 L1060.0 637.59 L1063.0 637.62 L1066.0 637.65 L1069.0 637.67 L1072.0 637.68 L1075.0 637.69 L1078.0 637.69 L1081.0 637.69 L1084.0 637.69 L1087.0 637.69 L1090.0 637.69 L1093.0 637.68 L1096.0 637.67 L1099.0 637.66" fill="none" stroke="url(#gB)" stroke-width="4.7" stroke-linecap="round"/><path d="M469.0 551.00 L472.0 551.43 L475.0 551.86 L478.0 552.29 L481.0 552.71 L484.0 553.14 L487.0 553.57 L490.0 554.00 L493.0 554.43 L496.0 554.86 L499.0 555.29 L502.0 555.71 L505.0 556.14 L508.0 556.57 L511.0 557.00 L514.0 557.43 L517.0 557.86 L520.0 558.29 L523.0 558.73 L526.0 559.17 L529.0 559.63 L532.0 560.09 L535.0 560.58 L538.0 561.10 L541.0 561.65 L544.0 562.23 L547.0 562.85 L550.0 563.51 L553.0 564.22 L556.0 564.95 L559.0 565.71 L562.0 566.50 L565.0 567.30 L568.0 568.11 L571.0 568.93 L574.0 569.76 L577.0 570.59 L580.0 571.42 L583.0 572.25 L586.0 573.08 L589.0 573.91 L592.0 574.74 L595.0 575.57 L598.0 576.40 L601.0 577.23 L604.0 578.05 L607.0 578.87 L610.0 579.68 L613.0 580.48 L616.0 581.27 L619.0 582.05 L622.0 582.82 L625.0 583.58 L628.0 584.33 L631.0 585.07 L634.0 585.80 L637.0 586.52 L640.0 587.24 L643.0 587.95 L646.0 588.66 L649.0 589.37 L652.0 590.08 L655.0 590.78 L658.0 591.48 L661.0 592.17 L664.0 592.86 L667.0 593.55 L670.0 594.23 L673.0 594.91 L676.0 595.59 L679.0 596.26 L682.0 596.93 L685.0 597.59 L688.0 598.24 L691.0 598.89 L694.0 599.52 L697.0 600.13 L700.0 600.73 L703.0 601.31 L706.0 601.87 L709.0 602.42 L712.0 602.95 L715.0 603.48 L718.0 603.99 L721.0 604.50 L724.0 605.01 L727.0 605.51 L730.0 606.01 L733.0 606.51 L736.0 607.00 L739.0 607.49 L742.0 607.98 L745.0 608.46 L748.0 608.94 L751.0 609.42 L754.0 609.90 L757.0 610.37 L760.0 610.84 L763.0 611.31 L766.0 611.77 L769.0 612.22 L772.0 612.67 L775.0 613.11 L778.0 613.53 L781.0 613.95 L784.0 614.35 L787.0 614.74 L790.0 615.12 L793.0 615.49 L796.0 615.86 L799.0 616.22 L802.0 616.58 L805.0 616.93 L808.0 617.29 L811.0 617.64 L814.0 617.99 L817.0 618.35 L820.0 618.70 L823.0 619.05 L826.0 619.40 L829.0 619.76 L832.0 620.11 L835.0 620.46 L838.0 620.81 L841.0 621.16 L844.0 621.52 L847.0 621.86 L850.0 622.21 L853.0 622.56 L856.0 622.90 L859.0 623.24 L862.0 623.58 L865.0 623.91 L868.0 624.24 L871.0 624.57 L874.0 624.90 L877.0 625.22 L880.0 625.54 L883.0 625.86 L886.0 626.18 L889.0 626.50 L892.0 626.81 L895.0 627.12 L898.0 627.42 L901.0 627.72 L904.0 628.01 L907.0 628.29 L910.0 628.58 L913.0 628.85 L916.0 629.13 L919.0 629.40 L922.0 629.67 L925.0 629.94 L928.0 630.21 L931.0 630.47 L934.0 630.73 L937.0 630.99 L940.0 631.24 L943.0 631.49 L946.0 631.74 L949.0 631.98 L952.0 632.22 L955.0 632.45 L958.0 632.69 L961.0 632.92 L964.0 633.15 L967.0 633.38 L970.0 633.60 L973.0 633.82 L976.0 634.04 L979.0 634.25 L982.0 634.45 L985.0 634.65 L988.0 634.85 L991.0 635.04 L994.0 635.23 L997.0 635.41 L1000.0 635.59 L1003.0 635.76 L1006.0 635.93 L1009.0 636.10 L1012.0 636.25 L1015.0 636.40 L1018.0 636.54 L1021.0 636.66 L1024.0 636.78 L1027.0 636.88 L1030.0 636.97 L1033.0 637.06 L1036.0 637.14 L1039.0 637.21 L1042.0 637.28 L1045.0 637.35 L1048.0 637.41 L1051.0 637.46 L1054.0 637.51 L1057.0 637.56 L1060.0 637.59 L1063.0 637.62 L1066.0 637.65 L1069.0 637.67 L1072.0 637.68 L1075.0 637.69 L1078.0 637.69 L1081.0 637.69 L1084.0 637.69 L1087.0 637.69 L1090.0 637.69 L1093.0 637.68 L1096.0 637.67 L1099.0 637.66 L1102.0 637.64 L1105.0 637.62 L1108.0 637.60 L1111.0 637.58 L1114.0 637.55 L1117.0 637.53 L1120.0 637.50 L1123.0 637.47 L1126.0 637.44 L1129.0 637.41 L1132.0 637.38 L1135.0 637.34 L1138.0 637.31 L1141.0 637.28 L1144.0 637.24 L1147.0 637.21 L1150.0 637.17 L1153.0 637.14 L1156.0 637.10 L1159.0 637.06 L1162.0 637.02 L1165.0 636.99 L1168.0 636.95 L1171.0 636.91 L1174.0 636.87 L1177.0 636.84 L1180.0 636.80 L1183.0 636.76 L1186.0 636.73 L1189.0 636.69 L1192.0 636.65 L1195.0 636.61 L1198.0 636.58 L1201.0 636.54 L1204.0 636.50 L1207.0 636.47 L1210.0 636.43 L1213.0 636.40 L1216.0 636.37 L1219.0 636.33 L1222.0 636.30 L1225.0 636.28 L1228.0 636.25 L1231.0 636.22 L1234.0 636.20 L1237.0 636.17 L1240.0 636.15 L1243.0 636.13 L1246.0 636.10 L1249.0 636.07 L1252.0 636.05 L1255.0 636.02 L1258.0 635.99 L1261.0 635.95 L1264.0 635.92 L1267.0 635.88 L1270.0 635.84 L1273.0 635.80 L1276.0 635.75 L1279.0 635.71 L1282.0 635.66 L1285.0 635.60 L1288.0 635.54 L1291.0 635.48 L1294.0 635.40 L1297.0 635.32 L1300.0 635.22 L1303.0 635.12 L1306.0 635.00 L1309.0 634.87 L1312.0 634.73 L1315.0 634.59 L1318.0 634.44 L1321.0 634.29 L1324.0 634.13 L1327.0 633.96 L1330.0 633.80 L1333.0 633.63 L1336.0 633.45 L1339.0 633.27 L1342.0 633.08 L1345.0 632.88 L1348.0 632.68 L1351.0 632.48 L1354.0 632.27 L1357.0 632.06 L1360.0 631.85 L1363.0 631.63 L1366.0 631.41 L1369.0 631.20 L1372.0 630.98 L1375.0 630.76 L1378.0 630.55 L1381.0 630.33 L1384.0 630.11 L1387.0 629.89 L1390.0 629.67 L1393.0 629.46 L1396.0 629.23 L1399.0 629.01 L1402.0 628.78 L1405.0 628.55 L1408.0 628.31 L1411.0 628.06 L1414.0 627.79 L1417.0 627.51 L1420.0 627.20 L1423.0 626.88 L1426.0 626.54 L1429.0 626.19 L1432.0 625.82 L1435.0 625.44 L1438.0 625.05 L1441.0 624.65 L1444.0 624.26 L1447.0 623.85 L1450.0 623.45 L1453.0 623.05 L1456.0 622.65 L1459.0 622.25 L1462.0 621.84 L1465.0 621.44 L1468.0 621.04 L1471.0 620.65 L1474.0 620.25 L1477.0 619.85 L1480.0 619.45 L1483.0 619.06 L1486.0 618.67 L1489.0 618.27 L1492.0 617.89 L1495.0 617.50 L1498.0 617.12 L1501.0 616.75 L1504.0 616.38 L1507.0 616.01 L1510.0 615.64 L1513.0 615.28 L1516.0 614.93 L1519.0 614.57 L1522.0 614.21 L1525.0 613.86 L1528.0 613.50 L1531.0 613.14 L1534.0 612.78 L1537.0 612.42 L1540.0 612.05 L1543.0 611.68 L1546.0 611.31 L1549.0 610.94 L1552.0 610.56 L1555.0 610.18 L1558.0 609.80 L1561.0 609.41 L1564.0 609.03 L1567.0 608.64 L1570.0 608.24 L1573.0 607.84 L1576.0 607.43 L1579.0 607.02 L1582.0 606.60 L1585.0 606.17 L1588.0 605.73 L1591.0 605.29 L1594.0 604.85 L1597.0 604.39 L1600.0 603.94 L1603.0 603.48 L1606.0 603.02 L1609.0 602.55 L1612.0 602.07 L1615.0 601.60 L1618.0 601.11 L1621.0 600.62 L1624.0 600.11 L1627.0 599.61 L1630.0 599.09 L1633.0 598.57 L1636.0 598.04 L1639.0 597.50 L1642.0 596.96 L1645.0 596.41 L1648.0 595.84 L1651.0 595.26 L1654.0 594.65 L1657.0 594.02 L1660.0 593.36 L1663.0 592.68 L1666.0 591.96 L1669.0 591.23 L1672.0 590.47 L1675.0 589.69 L1678.0 588.89 L1681.0 588.08 L1684.0 587.24 L1687.0 586.39 L1690.0 585.51 L1693.0 584.60 L1696.0 583.66 L1699.0 582.67 L1702.0 581.64 L1705.0 580.57 L1708.0 579.47 L1711.0 578.32 L1714.0 577.15 L1717.0 575.94 L1720.0 574.71 L1723.0 573.45 L1726.0 572.16 L1729.0 570.82 L1732.0 569.43 L1735.0 567.98 L1738.0 566.46 L1741.0 564.86 L1744.0 563.19 L1747.0 561.45 L1750.0 559.65 L1753.0 557.79" fill="none" stroke="url(#gB)" stroke-width="4.2" stroke-linecap="round"/><path d="M468.0 564.41 L471.0 564.78 L474.0 565.16 L477.0 565.55 L480.0 565.95 L483.0 566.36 L486.0 566.79 L489.0 567.23 L492.0 567.70 L495.0 568.18 L498.0 568.67 L501.0 569.18 L504.0 569.70 L507.0 570.22 L510.0 570.75 L513.0 571.29 L516.0 571.82 L519.0 572.36 L522.0 572.91 L525.0 573.46 L528.0 574.02 L531.0 574.59 L534.0 575.19 L537.0 575.80 L540.0 576.46 L543.0 577.14 L546.0 577.87 L549.0 578.65 L552.0 579.46 L555.0 580.31 L558.0 581.20 L561.0 582.11 L564.0 583.04 L567.0 583.98 L570.0 584.93 L573.0 585.89 L576.0 586.85 L579.0 587.81 L582.0 588.78 L585.0 589.74 L588.0 590.71 L591.0 591.67 L594.0 592.63 L597.0 593.59 L600.0 594.54 L603.0 595.48 L606.0 596.41 L609.0 597.31 L612.0 598.20 L615.0 599.05 L618.0 599.86 L621.0 600.64 L624.0 601.38 L627.0 602.08 L630.0 602.75 L633.0 603.40 L636.0 604.02 L639.0 604.63 L642.0 605.24 L645.0 605.84 L648.0 606.45 L651.0 607.07 L654.0 607.71 L657.0 608.36 L660.0 609.03 L663.0 609.72 L666.0 610.44 L669.0 611.17 L672.0 611.91 L675.0 612.67 L678.0 613.43 L681.0 614.20 L684.0 614.95 L687.0 615.70 L690.0 616.43 L693.0 617.14 L696.0 617.82 L699.0 618.48 L702.0 619.10 L705.0 619.69 L708.0 620.25 L711.0 620.78 L714.0 621.29 L717.0 621.79 L720.0 622.27 L723.0 622.74 L726.0 623.21 L729.0 623.67 L732.0 624.12 L735.0 624.57 L738.0 625.01 L741.0 625.45 L744.0 625.88 L747.0 626.30 L750.0 626.72 L753.0 627.14 L756.0 627.55 L759.0 627.96 L762.0 628.36 L765.0 628.77 L768.0 629.17 L771.0 629.57 L774.0 629.97 L777.0 630.36 L780.0 630.75 L783.0 631.14 L786.0 631.53 L789.0 631.91 L792.0 632.29 L795.0 632.67 L798.0 633.05 L801.0 633.42 L804.0 633.80 L807.0 634.17 L810.0 634.54 L813.0 634.91 L816.0 635.28 L819.0 635.65" fill="none" stroke="url(#gC)" stroke-width="5.2" stroke-linecap="round"/><path d="M702.0 619.10 L705.0 619.69 L708.0 620.25 L711.0 620.78 L714.0 621.29 L717.0 621.79 L720.0 622.27 L723.0 622.74 L726.0 623.21 L729.0 623.67 L732.0 624.12 L735.0 624.57 L738.0 625.01 L741.0 625.45 L744.0 625.88 L747.0 626.30 L750.0 626.72 L753.0 627.14 L756.0 627.55 L759.0 627.96 L762.0 628.36 L765.0 628.77 L768.0 629.17 L771.0 629.57 L774.0 629.97 L777.0 630.36 L780.0 630.75 L783.0 631.14 L786.0 631.53 L789.0 631.91 L792.0 632.29 L795.0 632.67 L798.0 633.05 L801.0 633.42 L804.0 633.80 L807.0 634.17 L810.0 634.54 L813.0 634.91 L816.0 635.28 L819.0 635.65 L822.0 636.02 L825.0 636.39 L828.0 636.75 L831.0 637.11 L834.0 637.48 L837.0 637.84 L840.0 638.20 L843.0 638.56 L846.0 638.93 L849.0 639.29 L852.0 639.66 L855.0 640.03 L858.0 640.41 L861.0 640.79 L864.0 641.17 L867.0 641.55 L870.0 641.94 L873.0 642.33 L876.0 642.73 L879.0 643.12 L882.0 643.52 L885.0 643.92 L888.0 644.32 L891.0 644.72 L894.0 645.12 L897.0 645.53 L900.0 645.94 L903.0 646.35 L906.0 646.76 L909.0 647.17 L912.0 647.59 L915.0 648.00 L918.0 648.41 L921.0 648.83 L924.0 649.23 L927.0 649.63 L930.0 650.03 L933.0 650.41 L936.0 650.77 L939.0 651.12 L942.0 651.46 L945.0 651.78 L948.0 652.08 L951.0 652.37 L954.0 652.65 L957.0 652.92 L960.0 653.18 L963.0 653.44 L966.0 653.69 L969.0 653.94 L972.0 654.17 L975.0 654.41 L978.0 654.63 L981.0 654.85 L984.0 655.06 L987.0 655.27 L990.0 655.47 L993.0 655.66 L996.0 655.85 L999.0 656.03 L1002.0 656.21 L1005.0 656.38 L1008.0 656.56 L1011.0 656.72 L1014.0 656.88 L1017.0 657.04 L1020.0 657.18 L1023.0 657.32 L1026.0 657.45 L1029.0 657.58 L1032.0 657.70 L1035.0 657.81 L1038.0 657.92 L1041.0 658.03 L1044.0 658.14 L1047.0 658.24 L1050.0 658.35 L1053.0 658.45 L1056.0 658.56 L1059.0 658.67 L1062.0 658.77 L1065.0 658.87 L1068.0 658.98 L1071.0 659.08 L1074.0 659.19 L1077.0 659.29 L1080.0 659.39 L1083.0 659.49 L1086.0 659.58 L1089.0 659.66 L1092.0 659.74 L1095.0 659.80 L1098.0 659.86" fill="none" stroke="url(#gC)" stroke-width="4.7" stroke-linecap="round"/><path d="M468.0 564.41 L471.0 564.78 L474.0 565.16 L477.0 565.55 L480.0 565.95 L483.0 566.36 L486.0 566.79 L489.0 567.23 L492.0 567.70 L495.0 568.18 L498.0 568.67 L501.0 569.18 L504.0 569.70 L507.0 570.22 L510.0 570.75 L513.0 571.29 L516.0 571.82 L519.0 572.36 L522.0 572.91 L525.0 573.46 L528.0 574.02 L531.0 574.59 L534.0 575.19 L537.0 575.80 L540.0 576.46 L543.0 577.14 L546.0 577.87 L549.0 578.65 L552.0 579.46 L555.0 580.31 L558.0 581.20 L561.0 582.11 L564.0 583.04 L567.0 583.98 L570.0 584.93 L573.0 585.89 L576.0 586.85 L579.0 587.81 L582.0 588.78 L585.0 589.74 L588.0 590.71 L591.0 591.67 L594.0 592.63 L597.0 593.59 L600.0 594.54 L603.0 595.48 L606.0 596.41 L609.0 597.31 L612.0 598.20 L615.0 599.05 L618.0 599.86 L621.0 600.64 L624.0 601.38 L627.0 602.08 L630.0 602.75 L633.0 603.40 L636.0 604.02 L639.0 604.63 L642.0 605.24 L645.0 605.84 L648.0 606.45 L651.0 607.07 L654.0 607.71 L657.0 608.36 L660.0 609.03 L663.0 609.72 L666.0 610.44 L669.0 611.17 L672.0 611.91 L675.0 612.67 L678.0 613.43 L681.0 614.20 L684.0 614.95 L687.0 615.70 L690.0 616.43 L693.0 617.14 L696.0 617.82 L699.0 618.48 L702.0 619.10 L705.0 619.69 L708.0 620.25 L711.0 620.78 L714.0 621.29 L717.0 621.79 L720.0 622.27 L723.0 622.74 L726.0 623.21 L729.0 623.67 L732.0 624.12 L735.0 624.57 L738.0 625.01 L741.0 625.45 L744.0 625.88 L747.0 626.30 L750.0 626.72 L753.0 627.14 L756.0 627.55 L759.0 627.96 L762.0 628.36 L765.0 628.77 L768.0 629.17 L771.0 629.57 L774.0 629.97 L777.0 630.36 L780.0 630.75 L783.0 631.14 L786.0 631.53 L789.0 631.91 L792.0 632.29 L795.0 632.67 L798.0 633.05 L801.0 633.42 L804.0 633.80 L807.0 634.17 L810.0 634.54 L813.0 634.91 L816.0 635.28 L819.0 635.65 L822.0 636.02 L825.0 636.39 L828.0 636.75 L831.0 637.11 L834.0 637.48 L837.0 637.84 L840.0 638.20 L843.0 638.56 L846.0 638.93 L849.0 639.29 L852.0 639.66 L855.0 640.03 L858.0 640.41 L861.0 640.79 L864.0 641.17 L867.0 641.55 L870.0 641.94 L873.0 642.33 L876.0 642.73 L879.0 643.12 L882.0 643.52 L885.0 643.92 L888.0 644.32 L891.0 644.72 L894.0 645.12 L897.0 645.53 L900.0 645.94 L903.0 646.35 L906.0 646.76 L909.0 647.17 L912.0 647.59 L915.0 648.00 L918.0 648.41 L921.0 648.83 L924.0 649.23 L927.0 649.63 L930.0 650.03 L933.0 650.41 L936.0 650.77 L939.0 651.12 L942.0 651.46 L945.0 651.78 L948.0 652.08 L951.0 652.37 L954.0 652.65 L957.0 652.92 L960.0 653.18 L963.0 653.44 L966.0 653.69 L969.0 653.94 L972.0 654.17 L975.0 654.41 L978.0 654.63 L981.0 654.85 L984.0 655.06 L987.0 655.27 L990.0 655.47 L993.0 655.66 L996.0 655.85 L999.0 656.03 L1002.0 656.21 L1005.0 656.38 L1008.0 656.56 L1011.0 656.72 L1014.0 656.88 L1017.0 657.04 L1020.0 657.18 L1023.0 657.32 L1026.0 657.45 L1029.0 657.58 L1032.0 657.70 L1035.0 657.81 L1038.0 657.92 L1041.0 658.03 L1044.0 658.14 L1047.0 658.24 L1050.0 658.35 L1053.0 658.45 L1056.0 658.56 L1059.0 658.67 L1062.0 658.77 L1065.0 658.87 L1068.0 658.98 L1071.0 659.08 L1074.0 659.19 L1077.0 659.29 L1080.0 659.39 L1083.0 659.49 L1086.0 659.58 L1089.0 659.66 L1092.0 659.74 L1095.0 659.80 L1098.0 659.86 L1101.0 659.90 L1104.0 659.92 L1107.0 659.94 L1110.0 659.94 L1113.0 659.93 L1116.0 659.92 L1119.0 659.91 L1122.0 659.89 L1125.0 659.87 L1128.0 659.86 L1131.0 659.86 L1134.0 659.86 L1137.0 659.88 L1140.0 659.91 L1143.0 659.96 L1146.0 660.01 L1149.0 660.08 L1152.0 660.16 L1155.0 660.25 L1158.0 660.35 L1161.0 660.45 L1164.0 660.56 L1167.0 660.68 L1170.0 660.80 L1173.0 660.93 L1176.0 661.07 L1179.0 661.23 L1182.0 661.39 L1185.0 661.56 L1188.0 661.75 L1191.0 661.94 L1194.0 662.13 L1197.0 662.33 L1200.0 662.53 L1203.0 662.72 L1206.0 662.90 L1209.0 663.05 L1212.0 663.19 L1215.0 663.29 L1218.0 663.36 L1221.0 663.39 L1224.0 663.38 L1227.0 663.33 L1230.0 663.25 L1233.0 663.14 L1236.0 663.02 L1239.0 662.87 L1242.0 662.71 L1245.0 662.55 L1248.0 662.38 L1251.0 662.20 L1254.0 662.02 L1257.0 661.84 L1260.0 661.65 L1263.0 661.46 L1266.0 661.27 L1269.0 661.08 L1272.0 660.88 L1275.0 660.68 L1278.0 660.48 L1281.0 660.28 L1284.0 660.08 L1287.0 659.88 L1290.0 659.67 L1293.0 659.47 L1296.0 659.26 L1299.0 659.06 L1302.0 658.85 L1305.0 658.64 L1308.0 658.44 L1311.0 658.23 L1314.0 658.02 L1317.0 657.81 L1320.0 657.60 L1323.0 657.39 L1326.0 657.18 L1329.0 656.97 L1332.0 656.76 L1335.0 656.55 L1338.0 656.34 L1341.0 656.13 L1344.0 655.92 L1347.0 655.71 L1350.0 655.50 L1353.0 655.29 L1356.0 655.08 L1359.0 654.87 L1362.0 654.65 L1365.0 654.44 L1368.0 654.22 L1371.0 654.00 L1374.0 653.77 L1377.0 653.54 L1380.0 653.31 L1383.0 653.06 L1386.0 652.81 L1389.0 652.56 L1392.0 652.30 L1395.0 652.04 L1398.0 651.78 L1401.0 651.51 L1404.0 651.25 L1407.0 650.98 L1410.0 650.72 L1413.0 650.46 L1416.0 650.21 L1419.0 649.95 L1422.0 649.71 L1425.0 649.47 L1428.0 649.23 L1431.0 648.99 L1434.0 648.76 L1437.0 648.53 L1440.0 648.31 L1443.0 648.08 L1446.0 647.86 L1449.0 647.64 L1452.0 647.42 L1455.0 647.20 L1458.0 646.99 L1461.0 646.78 L1464.0 646.57 L1467.0 646.37 L1470.0 646.16 L1473.0 645.96 L1476.0 645.76 L1479.0 645.56 L1482.0 645.36 L1485.0 645.16 L1488.0 644.96 L1491.0 644.75 L1494.0 644.54 L1497.0 644.33 L1500.0 644.11 L1503.0 643.88 L1506.0 643.64 L1509.0 643.40 L1512.0 643.16 L1515.0 642.91 L1518.0 642.66 L1521.0 642.40 L1524.0 642.14 L1527.0 641.87 L1530.0 641.60 L1533.0 641.31 L1536.0 641.02 L1539.0 640.71 L1542.0 640.40 L1545.0 640.07 L1548.0 639.73 L1551.0 639.38 L1554.0 639.02 L1557.0 638.65 L1560.0 638.26 L1563.0 637.87 L1566.0 637.46 L1569.0 637.04 L1572.0 636.58 L1575.0 636.10 L1578.0 635.59 L1581.0 635.04 L1584.0 634.46 L1587.0 633.84 L1590.0 633.19 L1593.0 632.52 L1596.0 631.82 L1599.0 631.11 L1602.0 630.40 L1605.0 629.67 L1608.0 628.95 L1611.0 628.22 L1614.0 627.50 L1617.0 626.78 L1620.0 626.06 L1623.0 625.34 L1626.0 624.63 L1629.0 623.93 L1632.0 623.22 L1635.0 622.52 L1638.0 621.81 L1641.0 621.10 L1644.0 620.39 L1647.0 619.68 L1650.0 618.95 L1653.0 618.21 L1656.0 617.46 L1659.0 616.70 L1662.0 615.91 L1665.0 615.12 L1668.0 614.30 L1671.0 613.47 L1674.0 612.63 L1677.0 611.78 L1680.0 610.93 L1683.0 610.06 L1686.0 609.19 L1689.0 608.30 L1692.0 607.41 L1695.0 606.50 L1698.0 605.57 L1701.0 604.64 L1704.0 603.68 L1707.0 602.71 L1710.0 601.73 L1713.0 600.73 L1716.0 599.71 L1719.0 598.68 L1722.0 597.62 L1725.0 596.53 L1728.0 595.40 L1731.0 594.22 L1734.0 592.98 L1737.0 591.66 L1740.0 590.25 L1743.0 588.76 L1746.0 587.19 L1749.0 585.54 L1752.0 583.83 L1755.0 582.06" fill="none" stroke="url(#gC)" stroke-width="4.2" stroke-linecap="round"/><path d="M1777.5 533 L1787.5 534.2" stroke="#40e0a0" stroke-width="3" stroke-linecap="round"/><circle cx="1769" cy="543" r="1" fill="#4060ff"/></svg>
<div class="a" style="left:1896px;top:175px;width:16px;height:835px;background:#f0f0f0"></div>
<div class="a" style="left:1897px;top:327px;width:14px;height:666px;background:#cdcdcd"></div>
<svg class="a" style="left:1899px;top:181px" width="9" height="6" viewBox="0 0 9 6"><path d="M1 5L4.5 1.5L8 5" fill="none" stroke="#606060" stroke-width="1.5"/></svg>
<svg class="a" style="left:1899px;top:998px" width="9" height="6" viewBox="0 0 9 6"><path d="M1 1L4.5 4.5L8 1" fill="none" stroke="#606060" stroke-width="1.5"/></svg>
<div class="a" style="left:461px;top:148px;width:36px;height:21px;background:#fff;border:1px solid #a0a0a0;box-shadow:2px 2px 2px rgba(0,0,0,0.25)"></div>
<div class="t" style="left:466px;top:152px;font-size:12px;color:#555">选项</div>
<div class="a" style="left:0;top:1016px;width:1920px;height:1px;background:#a8a8a8"></div>
<div class="t" style="left:4px;top:1024px;font-size:12px;color:#222;-webkit-text-stroke:0">软件版本:</div>
<div class="t" style="left:60px;top:1024px;font-size:12px;color:#222;-webkit-text-stroke:0">3.1.3.0</div>
<div class="t" style="left:104px;top:1024px;font-size:12px;color:#222;-webkit-text-stroke:0">更新日期:</div>
<div class="t" style="left:160px;top:1024px;font-size:12px;color:#222;-webkit-text-stroke:0">2023.3</div>
<div class="t" style="left:205px;top:1024px;font-size:12px;color:#222;-webkit-text-stroke:0">依赖库版本:</div>
<div class="t" style="left:273px;top:1024px;font-size:12px;color:#222;-webkit-text-stroke:0"><span style="font-size:12.5px">1.7.3(x64),1.0.6.3 (Mar 12 2023)</span></div>
<div class="a" style="left:1116px;top:1011px;width:209px;height:24px;background:#fff;border:1px solid #ddd;border-radius:4px;box-shadow:0 1px 2px rgba(0,0,0,0.15)"></div>
<div class="a" style="left:1121px;top:1014px;width:18px;height:18px;background:#e85a20;border-radius:3px"></div>
<div class="t" style="left:1124px;top:1016px;font-size:13px;color:#fff;font-weight:bold">万</div>
<div class="t" style="left:1147px;top:1016px;font-size:14px;color:#3d86b8;font-weight:bold">中</div>
<div class="t" style="left:1256px;top:1016px;font-size:14px;color:#3d86b8;font-weight:bold">簡</div>
<svg class="a" style="left:1168px;top:1014px" width="150" height="18" viewBox="0 0 150 18"><path d="M11 1 A8 8 0 0 1 1 15 A10 10 0 0 0 11 1Z" fill="#3d8fd8"/><circle cx="27" cy="5" r="2" fill="none" stroke="#3d8fd8" stroke-width="1.5"/><circle cx="33" cy="11" r="2.2" fill="#3d8fd8"/><path d="M34 11 Q34 15 31 16" stroke="#3d8fd8" stroke-width="1.5" fill="none"/><rect x="45" y="3" width="14" height="11" rx="1" fill="none" stroke="#3d8fb0" stroke-width="1.6"/><path d="M47 6H57M47 9H57M49 12H55" stroke="#3d8fb0" stroke-width="1.2" stroke-dasharray="1.2 1"/><circle cx="75" cy="5" r="2.5" fill="#ddd"/><path d="M69 15 Q75 6 81 15Z" fill="#ddd"/><path d="M112 3 L116 2 Q118 4 120 2 L124 3 L126 7 L123 8 V16 H113 V8 L110 7Z" fill="#3d8fd8"/><g transform="translate(140,9)" fill="#3d8fd8"><circle r="6"/><rect x="-1.5" y="-8" width="3" height="4" transform="rotate(0)"/><rect x="-1.5" y="-8" width="3" height="4" transform="rotate(45)"/><rect x="-1.5" y="-8" width="3" height="4" transform="rotate(90)"/><rect x="-1.5" y="-8" width="3" height="4" transform="rotate(135)"/><rect x="-1.5" y="-8" width="3" height="4" transform="rotate(180)"/><rect x="-1.5" y="-8" width="3" height="4" transform="rotate(225)"/><rect x="-1.5" y="-8" width="3" height="4" transform="rotate(270)"/><rect x="-1.5" y="-8" width="3" height="4" transform="rotate(315)"/></g><circle cx="140" cy="9" r="3" fill="#fff"/></svg>
<div class="a" style="left:0;top:1040px;width:1920px;height:8px;background:#2f3545"></div>
<div class="a" style="left:100px;top:1040px;width:48px;height:8px;background:#4a505e"></div>
<div class="a" style="left:1915px;top:1040px;width:1px;height:8px;background:#8a8f99"></div>
<div class="t" style="left:1810px;top:1045px;font-size:12px;color:#fff;letter-spacing:0.5px">14:44</div>
</body></html>
